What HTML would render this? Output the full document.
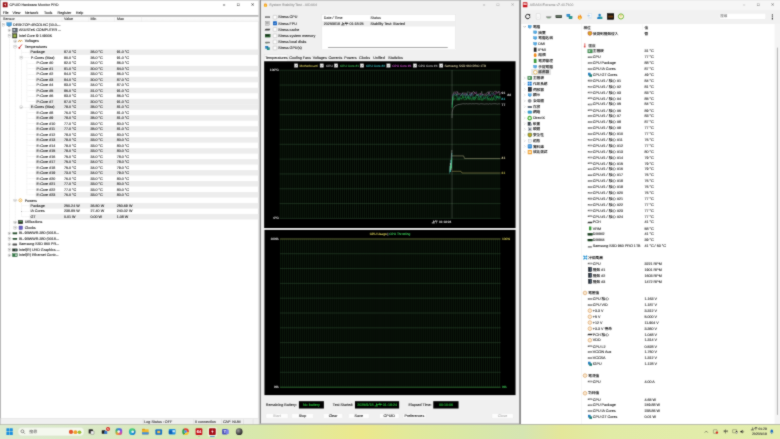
<!DOCTYPE html>
<html><head><meta charset="utf-8"><title>Desktop</title>
<style>
html,body{margin:0;padding:0}
body{width:780px;height:439px;overflow:hidden;background:#dfeab4;position:relative}
#root{position:absolute;left:0;top:0;width:2560px;height:1440px;transform:scale(0.3046875,0.3048611);transform-origin:0 0;
 font:12px "Liberation Sans","Noto Sans CJK TC",sans-serif;color:#222;overflow:hidden;text-rendering:geometricPrecision;-webkit-text-stroke:0.3px}
#wrap{position:absolute;left:0;top:0;width:780px;height:439px;overflow:hidden;filter:url(#soft)}
#root div{position:absolute;box-sizing:border-box}
#root span.t{position:absolute;white-space:nowrap;line-height:20px;height:20px}
#root span.g{position:absolute;white-space:nowrap;line-height:20px;height:20px;font-size:10.5px}
#root svg{position:absolute;overflow:visible}
</style></head><body>
<svg width="0" height="0" style="position:absolute"><filter id="soft" x="0" y="0" width="100%" height="100%" color-interpolation-filters="sRGB"><feConvolveMatrix order="3" kernelMatrix="0.03 0.08 0.03 0.08 0.56 0.08 0.03 0.08 0.03" edgeMode="duplicate" preserveAlpha="true"/></filter></svg>
<div id="wrap"><div id="root">
<div style="left:0.0px;top:0.0px;width:2560.0px;height:1394.0px;background:#c8c8c8"></div>
<div style="left:0.0px;top:0.0px;width:849.0px;height:1393.0px;background:#fff;border-left:2px solid #8a8a8a;border-top:1px solid #8a8a8a"></div>
<div style="left:849.0px;top:0.0px;width:7.0px;height:1393.0px;background:#cfcfcf"></div>
<div style="left:9.0px;top:7.0px;width:16.0px;height:17.0px;background:#9a1016;border-radius:2px"></div>
<svg style="left:9px;top:7px" width="16" height="17" viewBox="0 0 16 17"><path d="M9 2 L5 9 H8 L7 15 L11 7 H8 Z" fill="#fff"/></svg>
<span class="t" style="left:31.0px;top:5.5px;color:#333;font-size:11.7px">CPUID Hardware Monitor PRO</span>
<span class="t" style="left:729.2px;top:5.0px;color:#333;font-size:13px;width:12px;text-align:center">&#8211;</span>
<span class="t" style="left:776.1px;top:5.0px;color:#333;font-size:13px;width:12px;text-align:center">&#9633;</span>
<span class="t" style="left:823.4px;top:5.0px;color:#333;font-size:13px;width:12px;text-align:center">&#10005;</span>
<span class="t" style="left:9.0px;top:31.0px;color:#222">File</span>
<span class="t" style="left:41.0px;top:31.0px;color:#222">View</span>
<span class="t" style="left:82.0px;top:31.0px;color:#222">Network</span>
<span class="t" style="left:144.0px;top:31.0px;color:#222">Tools</span>
<span class="t" style="left:189.0px;top:31.0px;color:#222">Register</span>
<span class="t" style="left:249.0px;top:31.0px;color:#222">Help</span>
<div style="left:2.0px;top:49.5px;width:846.0px;height:5.0px;background:#a2a2a2"></div>
<div style="left:2.0px;top:54.5px;width:846.0px;height:16.5px;background:linear-gradient(#fff,#f4f4f4);border-bottom:1px solid #d8d8d8"></div>
<div style="left:203.0px;top:53.0px;width:1.0px;height:18.0px;background:#dcdcdc"></div>
<div style="left:290.0px;top:53.0px;width:1.0px;height:18.0px;background:#dcdcdc"></div>
<div style="left:376.0px;top:53.0px;width:1.0px;height:18.0px;background:#dcdcdc"></div>
<div style="left:463.0px;top:53.0px;width:1.0px;height:18.0px;background:#dcdcdc"></div>
<span class="t" style="left:10.0px;top:52.0px;color:#333">Sensor</span>
<span class="t" style="left:210.0px;top:52.0px;color:#333">Value</span>
<span class="t" style="left:297.0px;top:52.0px;color:#333">Min</span>
<span class="t" style="left:384.0px;top:52.0px;color:#333">Max</span>
<div style="left:97.0px;top:162.0px;width:751.0px;height:18.0px;background:#ededed"></div>
<div style="left:116.5px;top:216.0px;width:731.5px;height:18.0px;background:#ededed"></div>
<div style="left:116.5px;top:252.0px;width:731.5px;height:18.0px;background:#ededed"></div>
<div style="left:116.5px;top:288.0px;width:731.5px;height:18.0px;background:#ededed"></div>
<div style="left:116.5px;top:324.0px;width:731.5px;height:18.0px;background:#ededed"></div>
<div style="left:116.5px;top:378.0px;width:731.5px;height:18.0px;background:#ededed"></div>
<div style="left:116.5px;top:414.0px;width:731.5px;height:18.0px;background:#ededed"></div>
<div style="left:116.5px;top:450.0px;width:731.5px;height:18.0px;background:#ededed"></div>
<div style="left:116.5px;top:486.0px;width:731.5px;height:18.0px;background:#ededed"></div>
<div style="left:116.5px;top:522.0px;width:731.5px;height:18.0px;background:#ededed"></div>
<div style="left:116.5px;top:558.0px;width:731.5px;height:18.0px;background:#ededed"></div>
<div style="left:116.5px;top:594.0px;width:731.5px;height:18.0px;background:#ededed"></div>
<div style="left:116.5px;top:630.0px;width:731.5px;height:18.0px;background:#ededed"></div>
<div style="left:97.0px;top:666.0px;width:751.0px;height:18.0px;background:#ededed"></div>
<div style="left:97.0px;top:702.0px;width:751.0px;height:18.0px;background:#ededed"></div>
<div style="left:97.0px;top:342.0px;width:751.0px;height:18.0px;background:#ededed"></div>
<div style="left:30.0px;top:90.0px;width:1.0px;height:747.0px;border-left:1px dotted #b8b8b8"></div>
<div style="left:49.0px;top:126.0px;width:1.0px;height:621.0px;border-left:1px dotted #b8b8b8"></div>
<div style="left:69.0px;top:162.0px;width:1.0px;height:189.0px;border-left:1px dotted #b8b8b8"></div>
<div style="left:69.0px;top:666.0px;width:1.0px;height:45.0px;border-left:1px dotted #b8b8b8"></div>
<div style="left:88.0px;top:198.0px;width:1.0px;height:135.0px;border-left:1px dotted #b8b8b8"></div>
<div style="left:88.0px;top:360.0px;width:1.0px;height:279.0px;border-left:1px dotted #b8b8b8"></div>
<div style="left:88.0px;top:207.0px;width:28.0px;height:1.0px;border-top:1px dotted #b8b8b8"></div>
<div style="left:88.0px;top:225.0px;width:28.0px;height:1.0px;border-top:1px dotted #b8b8b8"></div>
<div style="left:88.0px;top:243.0px;width:28.0px;height:1.0px;border-top:1px dotted #b8b8b8"></div>
<div style="left:88.0px;top:261.0px;width:28.0px;height:1.0px;border-top:1px dotted #b8b8b8"></div>
<div style="left:88.0px;top:279.0px;width:28.0px;height:1.0px;border-top:1px dotted #b8b8b8"></div>
<div style="left:88.0px;top:297.0px;width:28.0px;height:1.0px;border-top:1px dotted #b8b8b8"></div>
<div style="left:88.0px;top:315.0px;width:28.0px;height:1.0px;border-top:1px dotted #b8b8b8"></div>
<div style="left:88.0px;top:333.0px;width:28.0px;height:1.0px;border-top:1px dotted #b8b8b8"></div>
<div style="left:88.0px;top:369.0px;width:28.0px;height:1.0px;border-top:1px dotted #b8b8b8"></div>
<div style="left:88.0px;top:387.0px;width:28.0px;height:1.0px;border-top:1px dotted #b8b8b8"></div>
<div style="left:88.0px;top:405.0px;width:28.0px;height:1.0px;border-top:1px dotted #b8b8b8"></div>
<div style="left:88.0px;top:423.0px;width:28.0px;height:1.0px;border-top:1px dotted #b8b8b8"></div>
<div style="left:88.0px;top:441.0px;width:28.0px;height:1.0px;border-top:1px dotted #b8b8b8"></div>
<div style="left:88.0px;top:459.0px;width:28.0px;height:1.0px;border-top:1px dotted #b8b8b8"></div>
<div style="left:88.0px;top:477.0px;width:28.0px;height:1.0px;border-top:1px dotted #b8b8b8"></div>
<div style="left:88.0px;top:495.0px;width:28.0px;height:1.0px;border-top:1px dotted #b8b8b8"></div>
<div style="left:88.0px;top:513.0px;width:28.0px;height:1.0px;border-top:1px dotted #b8b8b8"></div>
<div style="left:88.0px;top:531.0px;width:28.0px;height:1.0px;border-top:1px dotted #b8b8b8"></div>
<div style="left:88.0px;top:549.0px;width:28.0px;height:1.0px;border-top:1px dotted #b8b8b8"></div>
<div style="left:88.0px;top:567.0px;width:28.0px;height:1.0px;border-top:1px dotted #b8b8b8"></div>
<div style="left:88.0px;top:585.0px;width:28.0px;height:1.0px;border-top:1px dotted #b8b8b8"></div>
<div style="left:88.0px;top:603.0px;width:28.0px;height:1.0px;border-top:1px dotted #b8b8b8"></div>
<div style="left:88.0px;top:621.0px;width:28.0px;height:1.0px;border-top:1px dotted #b8b8b8"></div>
<div style="left:88.0px;top:639.0px;width:28.0px;height:1.0px;border-top:1px dotted #b8b8b8"></div>
<div style="left:69.0px;top:171.0px;width:28.0px;height:1.0px;border-top:1px dotted #b8b8b8"></div>
<div style="left:69.0px;top:675.0px;width:28.0px;height:1.0px;border-top:1px dotted #b8b8b8"></div>
<div style="left:69.0px;top:693.0px;width:28.0px;height:1.0px;border-top:1px dotted #b8b8b8"></div>
<div style="left:69.0px;top:711.0px;width:28.0px;height:1.0px;border-top:1px dotted #b8b8b8"></div>
<div style="left:30.0px;top:99.0px;width:10.0px;height:1.0px;border-top:1px dotted #b8b8b8"></div>
<div style="left:30.0px;top:117.0px;width:10.0px;height:1.0px;border-top:1px dotted #b8b8b8"></div>
<div style="left:30.0px;top:765.0px;width:10.0px;height:1.0px;border-top:1px dotted #b8b8b8"></div>
<div style="left:30.0px;top:783.0px;width:10.0px;height:1.0px;border-top:1px dotted #b8b8b8"></div>
<div style="left:30.0px;top:801.0px;width:10.0px;height:1.0px;border-top:1px dotted #b8b8b8"></div>
<div style="left:30.0px;top:819.0px;width:10.0px;height:1.0px;border-top:1px dotted #b8b8b8"></div>
<div style="left:30.0px;top:837.0px;width:10.0px;height:1.0px;border-top:1px dotted #b8b8b8"></div>
<div style="left:49.0px;top:135.0px;width:10.0px;height:1.0px;border-top:1px dotted #b8b8b8"></div>
<div style="left:49.0px;top:153.0px;width:10.0px;height:1.0px;border-top:1px dotted #b8b8b8"></div>
<div style="left:49.0px;top:657.0px;width:10.0px;height:1.0px;border-top:1px dotted #b8b8b8"></div>
<div style="left:49.0px;top:729.0px;width:10.0px;height:1.0px;border-top:1px dotted #b8b8b8"></div>
<div style="left:49.0px;top:747.0px;width:10.0px;height:1.0px;border-top:1px dotted #b8b8b8"></div>
<div style="left:69.0px;top:189.0px;width:28.0px;height:1.0px;border-top:1px dotted #b8b8b8"></div>
<div style="left:69.0px;top:351.0px;width:28.0px;height:1.0px;border-top:1px dotted #b8b8b8"></div>
<div style="left:6.5px;top:76.5px;width:9.0px;height:9.0px;border:1px solid #9a9a9a;background:#fff"></div>
<div style="left:8.5px;top:80.5px;width:5.0px;height:1.0px;background:#444"></div>
<div style="left:22.0px;top:74.0px;width:16.0px;height:11.0px;background:#4aa3df;border:1px solid #2b6ea3"></div>
<div style="left:26.0px;top:86.0px;width:8.0px;height:2.0px;background:#777"></div>
<span class="t" style="left:43.0px;top:71.0px;letter-spacing:-0.3px">DESKTOP-4RCOLHC (10.0....</span>
<div style="left:25.5px;top:94.5px;width:9.0px;height:9.0px;border:1px solid #9a9a9a;background:#fff"></div>
<div style="left:27.5px;top:98.5px;width:5.0px;height:1.0px;background:#444"></div>
<div style="left:29.5px;top:96.5px;width:1.0px;height:5.0px;background:#444"></div>
<div style="left:41.0px;top:92.0px;width:16.0px;height:14.0px;background:#5b6570;border:1px solid #333"></div>
<div style="left:44.0px;top:95.0px;width:6.0px;height:6.0px;background:#c9d2da"></div>
<span class="t" style="left:62.0px;top:89.0px;">ASUSTeK COMPUTER ...</span>
<div style="left:25.5px;top:112.5px;width:9.0px;height:9.0px;border:1px solid #9a9a9a;background:#fff"></div>
<div style="left:27.5px;top:116.5px;width:5.0px;height:1.0px;background:#444"></div>
<div style="left:41.0px;top:110.0px;width:15.0px;height:15.0px;background:#3c4a2a;border:1px solid #222"></div>
<div style="left:44.0px;top:113.0px;width:9.0px;height:9.0px;background:#9fb84a"></div>
<span class="t" style="left:62.0px;top:107.0px;">Intel Core i9 14900K</span>
<div style="left:44.5px;top:130.5px;width:9.0px;height:9.0px;border:1px solid #9a9a9a;background:#fff"></div>
<div style="left:46.5px;top:134.5px;width:5.0px;height:1.0px;background:#444"></div>
<div style="left:48.5px;top:132.5px;width:1.0px;height:5.0px;background:#444"></div>
<svg style="left:60px;top:129.0px" width="14" height="12"><path d="M0 9 L4 2 L7 8 L10 3 L14 6" stroke="#d08a1e" stroke-width="2.4" fill="none"/></svg>
<span class="t" style="left:81.0px;top:125.0px;">Voltages</span>
<div style="left:44.5px;top:148.5px;width:9.0px;height:9.0px;border:1px solid #9a9a9a;background:#fff"></div>
<div style="left:46.5px;top:152.5px;width:5.0px;height:1.0px;background:#444"></div>
<svg style="left:60px;top:145.0px" width="14" height="16"><path d="M12 1 L4 11" stroke="#c81e1e" stroke-width="2.6"/><circle cx="3.5" cy="12" r="3.2" fill="#c81e1e"/></svg>
<span class="t" style="left:81.0px;top:143.0px;">Temperatures</span>
<span class="t" style="left:100.0px;top:161.0px;">Package</span>
<span class="t" style="left:210.0px;top:161.0px;">87.0 °C</span>
<span class="t" style="left:297.0px;top:161.0px;">36.0 °C</span>
<span class="t" style="left:383.0px;top:161.0px;">91.0 °C</span>
<div style="left:64.5px;top:184.5px;width:9.0px;height:9.0px;border:1px solid #9a9a9a;background:#fff"></div>
<div style="left:66.5px;top:188.5px;width:5.0px;height:1.0px;background:#444"></div>
<span class="t" style="left:101.0px;top:179.0px;">P-Cores (Max)</span>
<span class="t" style="left:210.0px;top:179.0px;">90.0 °C</span>
<span class="t" style="left:297.0px;top:179.0px;">36.0 °C</span>
<span class="t" style="left:383.0px;top:179.0px;">91.0 °C</span>
<span class="t" style="left:120.0px;top:197.0px;">P-Core #0</span>
<span class="t" style="left:210.0px;top:197.0px;">82.0 °C</span>
<span class="t" style="left:297.0px;top:197.0px;">34.0 °C</span>
<span class="t" style="left:383.0px;top:197.0px;">86.0 °C</span>
<span class="t" style="left:120.0px;top:215.0px;">P-Core #1</span>
<span class="t" style="left:210.0px;top:215.0px;">81.0 °C</span>
<span class="t" style="left:297.0px;top:215.0px;">30.0 °C</span>
<span class="t" style="left:383.0px;top:215.0px;">84.0 °C</span>
<span class="t" style="left:120.0px;top:233.0px;">P-Core #2</span>
<span class="t" style="left:210.0px;top:233.0px;">84.0 °C</span>
<span class="t" style="left:297.0px;top:233.0px;">33.0 °C</span>
<span class="t" style="left:383.0px;top:233.0px;">86.0 °C</span>
<span class="t" style="left:120.0px;top:251.0px;">P-Core #3</span>
<span class="t" style="left:210.0px;top:251.0px;">84.0 °C</span>
<span class="t" style="left:297.0px;top:251.0px;">30.0 °C</span>
<span class="t" style="left:383.0px;top:251.0px;">87.0 °C</span>
<span class="t" style="left:120.0px;top:269.0px;">P-Core #4</span>
<span class="t" style="left:210.0px;top:269.0px;">83.0 °C</span>
<span class="t" style="left:297.0px;top:269.0px;">34.0 °C</span>
<span class="t" style="left:383.0px;top:269.0px;">87.0 °C</span>
<span class="t" style="left:120.0px;top:287.0px;">P-Core #5</span>
<span class="t" style="left:210.0px;top:287.0px;">86.0 °C</span>
<span class="t" style="left:297.0px;top:287.0px;">31.0 °C</span>
<span class="t" style="left:383.0px;top:287.0px;">91.0 °C</span>
<span class="t" style="left:120.0px;top:305.0px;">P-Core #6</span>
<span class="t" style="left:210.0px;top:305.0px;">83.0 °C</span>
<span class="t" style="left:297.0px;top:305.0px;">31.0 °C</span>
<span class="t" style="left:383.0px;top:305.0px;">86.0 °C</span>
<span class="t" style="left:120.0px;top:323.0px;">P-Core #7</span>
<span class="t" style="left:210.0px;top:323.0px;">87.0 °C</span>
<span class="t" style="left:297.0px;top:323.0px;">30.0 °C</span>
<span class="t" style="left:383.0px;top:323.0px;">91.0 °C</span>
<div style="left:64.5px;top:346.5px;width:9.0px;height:9.0px;border:1px solid #9a9a9a;background:#fff"></div>
<div style="left:66.5px;top:350.5px;width:5.0px;height:1.0px;background:#444"></div>
<span class="t" style="left:101.0px;top:341.0px;">E-Cores (Max)</span>
<span class="t" style="left:210.0px;top:341.0px;">79.0 °C</span>
<span class="t" style="left:297.0px;top:341.0px;">35.0 °C</span>
<span class="t" style="left:383.0px;top:341.0px;">81.0 °C</span>
<span class="t" style="left:120.0px;top:359.0px;">E-Core #8</span>
<span class="t" style="left:210.0px;top:359.0px;">76.0 °C</span>
<span class="t" style="left:297.0px;top:359.0px;">35.0 °C</span>
<span class="t" style="left:383.0px;top:359.0px;">81.0 °C</span>
<span class="t" style="left:120.0px;top:377.0px;">E-Core #9</span>
<span class="t" style="left:210.0px;top:377.0px;">78.0 °C</span>
<span class="t" style="left:297.0px;top:377.0px;">35.0 °C</span>
<span class="t" style="left:383.0px;top:377.0px;">81.0 °C</span>
<span class="t" style="left:120.0px;top:395.0px;">E-Core #10</span>
<span class="t" style="left:210.0px;top:395.0px;">77.0 °C</span>
<span class="t" style="left:297.0px;top:395.0px;">33.0 °C</span>
<span class="t" style="left:383.0px;top:395.0px;">80.0 °C</span>
<span class="t" style="left:120.0px;top:413.0px;">E-Core #11</span>
<span class="t" style="left:210.0px;top:413.0px;">77.0 °C</span>
<span class="t" style="left:297.0px;top:413.0px;">35.0 °C</span>
<span class="t" style="left:383.0px;top:413.0px;">81.0 °C</span>
<span class="t" style="left:120.0px;top:431.0px;">E-Core #12</span>
<span class="t" style="left:210.0px;top:431.0px;">78.0 °C</span>
<span class="t" style="left:297.0px;top:431.0px;">33.0 °C</span>
<span class="t" style="left:383.0px;top:431.0px;">80.0 °C</span>
<span class="t" style="left:120.0px;top:449.0px;">E-Core #13</span>
<span class="t" style="left:210.0px;top:449.0px;">79.0 °C</span>
<span class="t" style="left:297.0px;top:449.0px;">33.0 °C</span>
<span class="t" style="left:383.0px;top:449.0px;">80.0 °C</span>
<span class="t" style="left:120.0px;top:467.0px;">E-Core #14</span>
<span class="t" style="left:210.0px;top:467.0px;">79.0 °C</span>
<span class="t" style="left:297.0px;top:467.0px;">33.0 °C</span>
<span class="t" style="left:383.0px;top:467.0px;">80.0 °C</span>
<span class="t" style="left:120.0px;top:485.0px;">E-Core #15</span>
<span class="t" style="left:210.0px;top:485.0px;">79.0 °C</span>
<span class="t" style="left:297.0px;top:485.0px;">33.0 °C</span>
<span class="t" style="left:383.0px;top:485.0px;">80.0 °C</span>
<span class="t" style="left:120.0px;top:503.0px;">E-Core #16</span>
<span class="t" style="left:210.0px;top:503.0px;">75.0 °C</span>
<span class="t" style="left:297.0px;top:503.0px;">34.0 °C</span>
<span class="t" style="left:383.0px;top:503.0px;">78.0 °C</span>
<span class="t" style="left:120.0px;top:521.0px;">E-Core #17</span>
<span class="t" style="left:210.0px;top:521.0px;">75.0 °C</span>
<span class="t" style="left:297.0px;top:521.0px;">34.0 °C</span>
<span class="t" style="left:383.0px;top:521.0px;">78.0 °C</span>
<span class="t" style="left:120.0px;top:539.0px;">E-Core #18</span>
<span class="t" style="left:210.0px;top:539.0px;">75.0 °C</span>
<span class="t" style="left:297.0px;top:539.0px;">34.0 °C</span>
<span class="t" style="left:383.0px;top:539.0px;">79.0 °C</span>
<span class="t" style="left:120.0px;top:557.0px;">E-Core #19</span>
<span class="t" style="left:210.0px;top:557.0px;">73.0 °C</span>
<span class="t" style="left:297.0px;top:557.0px;">34.0 °C</span>
<span class="t" style="left:383.0px;top:557.0px;">79.0 °C</span>
<span class="t" style="left:120.0px;top:575.0px;">E-Core #20</span>
<span class="t" style="left:210.0px;top:575.0px;">76.0 °C</span>
<span class="t" style="left:297.0px;top:575.0px;">33.0 °C</span>
<span class="t" style="left:383.0px;top:575.0px;">80.0 °C</span>
<span class="t" style="left:120.0px;top:593.0px;">E-Core #21</span>
<span class="t" style="left:210.0px;top:593.0px;">77.0 °C</span>
<span class="t" style="left:297.0px;top:593.0px;">33.0 °C</span>
<span class="t" style="left:383.0px;top:593.0px;">80.0 °C</span>
<span class="t" style="left:120.0px;top:611.0px;">E-Core #22</span>
<span class="t" style="left:210.0px;top:611.0px;">77.0 °C</span>
<span class="t" style="left:297.0px;top:611.0px;">33.0 °C</span>
<span class="t" style="left:383.0px;top:611.0px;">80.0 °C</span>
<span class="t" style="left:120.0px;top:629.0px;">E-Core #23</span>
<span class="t" style="left:210.0px;top:629.0px;">76.0 °C</span>
<span class="t" style="left:297.0px;top:629.0px;">33.0 °C</span>
<span class="t" style="left:383.0px;top:629.0px;">80.0 °C</span>
<div style="left:44.5px;top:652.5px;width:9.0px;height:9.0px;border:1px solid #9a9a9a;background:#fff"></div>
<div style="left:46.5px;top:656.5px;width:5.0px;height:1.0px;background:#444"></div>
<svg style="left:60px;top:650.0px" width="14" height="14"><circle cx="7" cy="7" r="5" fill="none" stroke="#e6a020" stroke-width="2.2"/><circle cx="7" cy="7" r="1.6" fill="#e6a020"/></svg>
<span class="t" style="left:81.0px;top:647.0px;">Powers</span>
<span class="t" style="left:100.0px;top:665.0px;">Package</span>
<span class="t" style="left:210.0px;top:665.0px;">250.24 W</span>
<span class="t" style="left:297.0px;top:665.0px;">36.50 W</span>
<span class="t" style="left:383.0px;top:665.0px;">250.69 W</span>
<span class="t" style="left:100.0px;top:683.0px;">IA Cores</span>
<span class="t" style="left:210.0px;top:683.0px;">238.85 W</span>
<span class="t" style="left:297.0px;top:683.0px;">27.40 W</span>
<span class="t" style="left:383.0px;top:683.0px;">240.02 W</span>
<span class="t" style="left:100.0px;top:701.0px;">GT</span>
<span class="t" style="left:210.0px;top:701.0px;">0.01 W</span>
<span class="t" style="left:297.0px;top:701.0px;">0.00 W</span>
<span class="t" style="left:383.0px;top:701.0px;">1.08 W</span>
<div style="left:44.5px;top:724.5px;width:9.0px;height:9.0px;border:1px solid #9a9a9a;background:#fff"></div>
<div style="left:46.5px;top:728.5px;width:5.0px;height:1.0px;background:#444"></div>
<div style="left:48.5px;top:726.5px;width:1.0px;height:5.0px;background:#444"></div>
<div style="left:60.0px;top:723.0px;width:15.0px;height:11.0px;background:#2e3b2e;border:1px solid #1d1d1d"></div>
<div style="left:62.0px;top:726.0px;width:11.0px;height:2.0px;background:#5fbf5f"></div>
<span class="t" style="left:81.0px;top:719.0px;">Utilizations</span>
<div style="left:44.5px;top:742.5px;width:9.0px;height:9.0px;border:1px solid #9a9a9a;background:#fff"></div>
<div style="left:46.5px;top:746.5px;width:5.0px;height:1.0px;background:#444"></div>
<div style="left:48.5px;top:744.5px;width:1.0px;height:5.0px;background:#444"></div>
<div style="left:62.0px;top:741.0px;width:12.0px;height:12.0px;background:#6b62c4;border:1px solid #3a3390"></div>
<span class="t" style="left:81.0px;top:737.0px;">Clocks</span>
<div style="left:25.5px;top:760.5px;width:9.0px;height:9.0px;border:1px solid #9a9a9a;background:#fff"></div>
<div style="left:27.5px;top:764.5px;width:5.0px;height:1.0px;background:#444"></div>
<div style="left:29.5px;top:762.5px;width:1.0px;height:5.0px;background:#444"></div>
<div style="left:42.0px;top:763.0px;width:14.0px;height:5.0px;background:#2c5a34;border:1px solid #1c3a22"></div>
<span class="t" style="left:62.0px;top:755.0px;">BL.9BWWR.380 (0018...</span>
<div style="left:25.5px;top:778.5px;width:9.0px;height:9.0px;border:1px solid #9a9a9a;background:#fff"></div>
<div style="left:27.5px;top:782.5px;width:5.0px;height:1.0px;background:#444"></div>
<div style="left:29.5px;top:780.5px;width:1.0px;height:5.0px;background:#444"></div>
<div style="left:42.0px;top:781.0px;width:14.0px;height:5.0px;background:#2c5a34;border:1px solid #1c3a22"></div>
<span class="t" style="left:62.0px;top:773.0px;">BL.9BWWR.380 (0018...</span>
<div style="left:25.5px;top:796.5px;width:9.0px;height:9.0px;border:1px solid #9a9a9a;background:#fff"></div>
<div style="left:27.5px;top:800.5px;width:5.0px;height:1.0px;background:#444"></div>
<div style="left:29.5px;top:798.5px;width:1.0px;height:5.0px;background:#444"></div>
<div style="left:41.0px;top:799.0px;width:15.0px;height:6.0px;background:#555;border-radius:1px"></div>
<span class="t" style="left:62.0px;top:791.0px;">Samsung SSD 960 PR...</span>
<div style="left:25.5px;top:814.5px;width:9.0px;height:9.0px;border:1px solid #9a9a9a;background:#fff"></div>
<div style="left:27.5px;top:818.5px;width:5.0px;height:1.0px;background:#444"></div>
<div style="left:29.5px;top:816.5px;width:1.0px;height:5.0px;background:#444"></div>
<div style="left:41.0px;top:816.0px;width:16.0px;height:8.0px;background:#2b3d2b;border:1px solid #222"></div>
<div style="left:50.0px;top:818.0px;width:4.0px;height:4.0px;background:#8ac"></div>
<span class="t" style="left:62.0px;top:809.0px;">Intel(R) UHD Graphics ...</span>
<div style="left:25.5px;top:832.5px;width:9.0px;height:9.0px;border:1px solid #9a9a9a;background:#fff"></div>
<div style="left:27.5px;top:836.5px;width:5.0px;height:1.0px;background:#444"></div>
<div style="left:29.5px;top:834.5px;width:1.0px;height:5.0px;background:#444"></div>
<div style="left:41.0px;top:832.0px;width:16.0px;height:10.0px;background:#2e7a44;border:1px solid #1a4a28"></div>
<div style="left:50.0px;top:834.0px;width:5.0px;height:6.0px;background:#ddd"></div>
<span class="t" style="left:62.0px;top:827.0px;">Intel(R) Ethernet Contr...</span>
<div style="left:2.0px;top:1372.0px;width:846.0px;height:21.0px;background:#f0f0f0;border-top:1px solid #d0d0d0"></div>
<div style="left:468.7px;top:1375.0px;width:1.0px;height:16.0px;background:#c4c4c4"></div>
<div style="left:635.7px;top:1375.0px;width:1.0px;height:16.0px;background:#c4c4c4"></div>
<div style="left:726.3px;top:1375.0px;width:1.0px;height:16.0px;background:#c4c4c4"></div>
<div style="left:756.8px;top:1375.0px;width:1.0px;height:16.0px;background:#c4c4c4"></div>
<div style="left:798.5px;top:1375.0px;width:1.0px;height:16.0px;background:#c4c4c4"></div>
<div style="left:830.4px;top:1375.0px;width:1.0px;height:16.0px;background:#c4c4c4"></div>
<span class="t" style="left:473.6px;top:1372.5px;color:#333">Log Status : OFF</span>
<span class="t" style="left:640.0px;top:1372.5px;color:#333">0 connection</span>
<span class="t" style="left:731.6px;top:1372.5px;color:#333">CAP</span>
<span class="t" style="left:762.4px;top:1372.5px;color:#333">NUM</span>
<div style="left:853.0px;top:0.0px;width:851.4px;height:1389.8px;background:#f0f0f0;border-left:3px solid #6e6e6e;border-top:1px solid #6f6f6f;border-bottom:2px solid #b5b5b5"></div>
<svg style="left:864.5px;top:7.2px" width="13" height="16" viewBox="0 0 13 16"><path d="M6 0 C7 4 12 6 12 11 C12 14 9.5 16 6.5 16 C3 16 1 14 1 11 C1 8 3 7 3.5 4 C5 5 5.5 6 5.5 8 C7 6 7 3 6 0Z" fill="#f39a1e"/><path d="M6.5 16 C4.5 16 3.5 14.5 3.5 13 C3.5 11 5.5 10 6 8 C8 10 9.5 11 9.5 13 C9.5 14.8 8.3 16 6.5 16Z" fill="#fbd34a"/></svg>
<span class="t" style="left:883.9px;top:5.5px;color:#9b9b9b;font-size:11.6px">System Stability Test - AIDA64</span>
<span class="t" style="left:1582.5px;top:5.0px;color:#a6a6a6;font-size:13px;width:12px;text-align:center">&#8211;</span>
<span class="t" style="left:1628.5px;top:5.0px;color:#a6a6a6;font-size:13px;width:12px;text-align:center">&#9633;</span>
<span class="t" style="left:1676.7px;top:5.0px;color:#a6a6a6;font-size:13px;width:12px;text-align:center">&#10005;</span>
<div style="left:896.0px;top:49.7px;width:13.0px;height:13.0px;background:#fff;border:1px solid #8f8f8f;border-radius:2px"></div>
<span class="t" style="left:913.1px;top:46.2px;color:#222">Stress CPU</span>
<div style="left:870.4px;top:53.2px;width:16.0px;height:6.0px;background:#6b6b6b;border-radius:1px"></div>
<div style="left:872.4px;top:54.7px;width:12.0px;height:2.0px;background:#c8c8c8"></div>
<div style="left:896.0px;top:70.1px;width:13.0px;height:13.0px;background:#1a66c2;border-radius:2px"></div>
<svg style="left:896.0px;top:70.1px" width="13" height="13"><path d="M3 6.5 L5.5 9 L10 4" stroke="#fff" stroke-width="1.6" fill="none"/></svg>
<span class="t" style="left:913.1px;top:66.6px;color:#222">Stress FPU</span>
<div style="left:871.4px;top:69.6px;width:13.0px;height:13.0px;background:#d9d9d9;border:1px solid #777"></div>
<div style="left:873.4px;top:71.6px;width:9.0px;height:2.0px;background:#888"></div>
<div style="left:873.4px;top:76.6px;width:9.0px;height:2.0px;background:#888"></div>
<div style="left:896.0px;top:90.4px;width:13.0px;height:13.0px;background:#fff;border:1px solid #8f8f8f;border-radius:2px"></div>
<span class="t" style="left:913.1px;top:86.9px;color:#222">Stress cache</span>
<div style="left:870.4px;top:93.9px;width:16.0px;height:6.0px;background:#4a4a4a;border-radius:1px;transform:skewX(-30deg)"></div>
<div style="left:896.0px;top:110.8px;width:13.0px;height:13.0px;background:#fff;border:1px solid #8f8f8f;border-radius:2px"></div>
<span class="t" style="left:913.1px;top:107.2px;color:#222">Stress system memory</span>
<div style="left:870.4px;top:112.2px;width:17.0px;height:10.0px;background:#2c6b33;border:1px solid #1a3d1e"></div>
<div style="left:872.4px;top:114.2px;width:12.0px;height:3.0px;background:#111"></div>
<div style="left:896.0px;top:131.1px;width:13.0px;height:13.0px;background:#fff;border:1px solid #8f8f8f;border-radius:2px"></div>
<span class="t" style="left:913.1px;top:127.6px;color:#222">Stress local disks</span>
<div style="left:870.4px;top:136.6px;width:16.0px;height:5.0px;background:#7a7a7a;border-radius:2px"></div>
<div style="left:872.4px;top:140.6px;width:6.0px;height:1.0px;background:#3a9a3a"></div>
<div style="left:896.0px;top:151.4px;width:13.0px;height:13.0px;background:#fff;border:1px solid #8f8f8f;border-radius:2px"></div>
<span class="t" style="left:913.1px;top:147.9px;color:#222">Stress GPU(s)</span>
<div style="left:871.4px;top:150.9px;width:9.0px;height:8.0px;background:#2f8fd8;border:1px solid #1c5f99"></div>
<div style="left:876.4px;top:155.9px;width:9.0px;height:8.0px;background:#2a9d8f;border:1px solid #156"></div>
<div style="left:1055.5px;top:46.6px;width:439.8px;height:117.8px;background:#fff;border:1px solid #d4d4d4"></div>
<div style="left:1056.5px;top:69.2px;width:437.8px;height:18.0px;background:#efefef"></div>
<span class="t" style="left:1062.7px;top:48.7px;color:#333">Date / Time</span>
<span class="t" style="left:1216.0px;top:48.7px;color:#333">Status</span>
<span class="t" style="left:1062.7px;top:68.4px;color:#222">2025/9/18 上午 01:18:25</span>
<span class="t" style="left:1216.0px;top:68.4px;color:#222">Stability Test: Started</span>
<div style="left:1075.9px;top:153.5px;width:394.5px;height:3.0px;background:#8e8e8e;border-radius:2px"></div>
<div style="left:866.5px;top:178.1px;width:78.8px;height:23.6px;background:#fafafa;border:1px solid #d0d0d0;border-bottom:none"></div>
<span class="t" style="left:870.4px;top:178.3px;color:#222">Temperatures</span>
<span class="t" style="left:949.5px;top:178.3px;color:#222">Cooling Fans</span>
<span class="t" style="left:1026.3px;top:178.3px;color:#222">Voltages</span>
<span class="t" style="left:1077.8px;top:178.3px;color:#222">Currents</span>
<span class="t" style="left:1130.0px;top:178.3px;color:#222">Powers</span>
<span class="t" style="left:1178.3px;top:178.3px;color:#222">Clocks</span>
<span class="t" style="left:1225.2px;top:178.3px;color:#222">Unified</span>
<span class="t" style="left:1274.4px;top:178.3px;color:#222">Statistics</span>
<div style="left:867.4px;top:201.1px;width:824.5px;height:546.8px;background:#000"></div>
<div style="left:917.7px;top:230.3px;width:725.3px;height:486.1px;background:#020502"></div>
<svg style="left:0;top:0" width="2560" height="1440"><path d="M919.7 230.3V716.4M926.3 230.3V716.4M932.8 230.3V716.4M939.4 230.3V716.4M946.0 230.3V716.4M952.6 230.3V716.4M959.2 230.3V716.4M965.8 230.3V716.4M972.4 230.3V716.4M979.0 230.3V716.4M985.6 230.3V716.4M992.2 230.3V716.4M998.7 230.3V716.4M1005.3 230.3V716.4M1011.9 230.3V716.4M1018.5 230.3V716.4M1025.1 230.3V716.4M1031.7 230.3V716.4M1038.3 230.3V716.4M1044.9 230.3V716.4M1051.5 230.3V716.4M1058.1 230.3V716.4M1064.6 230.3V716.4M1071.2 230.3V716.4M1077.8 230.3V716.4M1084.4 230.3V716.4M1091.0 230.3V716.4M1097.6 230.3V716.4M1104.2 230.3V716.4M1110.8 230.3V716.4M1117.4 230.3V716.4M1124.0 230.3V716.4M1130.5 230.3V716.4M1137.1 230.3V716.4M1143.7 230.3V716.4M1150.3 230.3V716.4M1156.9 230.3V716.4M1163.5 230.3V716.4M1170.1 230.3V716.4M1176.7 230.3V716.4M1183.3 230.3V716.4M1189.9 230.3V716.4M1196.4 230.3V716.4M1203.0 230.3V716.4M1209.6 230.3V716.4M1216.2 230.3V716.4M1222.8 230.3V716.4M1229.4 230.3V716.4M1236.0 230.3V716.4M1242.6 230.3V716.4M1249.2 230.3V716.4M1255.8 230.3V716.4M1262.3 230.3V716.4M1268.9 230.3V716.4M1275.5 230.3V716.4M1282.1 230.3V716.4M1288.7 230.3V716.4M1295.3 230.3V716.4M1301.9 230.3V716.4M1308.5 230.3V716.4M1315.1 230.3V716.4M1321.7 230.3V716.4M1328.2 230.3V716.4M1334.8 230.3V716.4M1341.4 230.3V716.4M1348.0 230.3V716.4M1354.6 230.3V716.4M1361.2 230.3V716.4M1367.8 230.3V716.4M1374.4 230.3V716.4M1381.0 230.3V716.4M1387.6 230.3V716.4M1394.1 230.3V716.4M1400.7 230.3V716.4M1407.3 230.3V716.4M1413.9 230.3V716.4M1420.5 230.3V716.4M1427.1 230.3V716.4M1433.7 230.3V716.4M1440.3 230.3V716.4M1446.9 230.3V716.4M1453.5 230.3V716.4M1460.0 230.3V716.4M1466.6 230.3V716.4M1473.2 230.3V716.4M1479.8 230.3V716.4M1486.4 230.3V716.4M1493.0 230.3V716.4M1499.6 230.3V716.4M1506.2 230.3V716.4M1512.8 230.3V716.4M1519.4 230.3V716.4M1525.9 230.3V716.4M1532.5 230.3V716.4M1539.1 230.3V716.4M1545.7 230.3V716.4M1552.3 230.3V716.4M1558.9 230.3V716.4M1565.5 230.3V716.4M1572.1 230.3V716.4M1578.7 230.3V716.4M1585.3 230.3V716.4M1591.8 230.3V716.4M1598.4 230.3V716.4M1605.0 230.3V716.4M1611.6 230.3V716.4M1618.2 230.3V716.4M1624.8 230.3V716.4M1631.4 230.3V716.4M1638.0 230.3V716.4" stroke="#1b331b" stroke-width="1.5" fill="none"/><path d="M917.7 230.3H1643.0M917.7 278.9H1643.0M917.7 327.5H1643.0M917.7 376.1H1643.0M917.7 424.7H1643.0M917.7 473.3H1643.0M917.7 521.9H1643.0M917.7 570.6H1643.0M917.7 619.2H1643.0M917.7 667.8H1643.0M917.7 716.4H1643.0" stroke="#27432a" stroke-width="2" fill="none"/></svg>
<div style="left:868.4px;top:753.8px;width:824.1px;height:541.9px;background:#000"></div>
<div style="left:919.0px;top:783.6px;width:724.3px;height:486.1px;background:#020502"></div>
<svg style="left:0;top:0" width="2560" height="1440"><path d="M921.0 783.6V1269.8M927.6 783.6V1269.8M934.2 783.6V1269.8M940.7 783.6V1269.8M947.3 783.6V1269.8M953.9 783.6V1269.8M960.5 783.6V1269.8M967.1 783.6V1269.8M973.7 783.6V1269.8M980.3 783.6V1269.8M986.9 783.6V1269.8M993.5 783.6V1269.8M1000.1 783.6V1269.8M1006.6 783.6V1269.8M1013.2 783.6V1269.8M1019.8 783.6V1269.8M1026.4 783.6V1269.8M1033.0 783.6V1269.8M1039.6 783.6V1269.8M1046.2 783.6V1269.8M1052.8 783.6V1269.8M1059.4 783.6V1269.8M1066.0 783.6V1269.8M1072.5 783.6V1269.8M1079.1 783.6V1269.8M1085.7 783.6V1269.8M1092.3 783.6V1269.8M1098.9 783.6V1269.8M1105.5 783.6V1269.8M1112.1 783.6V1269.8M1118.7 783.6V1269.8M1125.3 783.6V1269.8M1131.9 783.6V1269.8M1138.4 783.6V1269.8M1145.0 783.6V1269.8M1151.6 783.6V1269.8M1158.2 783.6V1269.8M1164.8 783.6V1269.8M1171.4 783.6V1269.8M1178.0 783.6V1269.8M1184.6 783.6V1269.8M1191.2 783.6V1269.8M1197.8 783.6V1269.8M1204.3 783.6V1269.8M1210.9 783.6V1269.8M1217.5 783.6V1269.8M1224.1 783.6V1269.8M1230.7 783.6V1269.8M1237.3 783.6V1269.8M1243.9 783.6V1269.8M1250.5 783.6V1269.8M1257.1 783.6V1269.8M1263.7 783.6V1269.8M1270.2 783.6V1269.8M1276.8 783.6V1269.8M1283.4 783.6V1269.8M1290.0 783.6V1269.8M1296.6 783.6V1269.8M1303.2 783.6V1269.8M1309.8 783.6V1269.8M1316.4 783.6V1269.8M1323.0 783.6V1269.8M1329.6 783.6V1269.8M1336.1 783.6V1269.8M1342.7 783.6V1269.8M1349.3 783.6V1269.8M1355.9 783.6V1269.8M1362.5 783.6V1269.8M1369.1 783.6V1269.8M1375.7 783.6V1269.8M1382.3 783.6V1269.8M1388.9 783.6V1269.8M1395.5 783.6V1269.8M1402.0 783.6V1269.8M1408.6 783.6V1269.8M1415.2 783.6V1269.8M1421.8 783.6V1269.8M1428.4 783.6V1269.8M1435.0 783.6V1269.8M1441.6 783.6V1269.8M1448.2 783.6V1269.8M1454.8 783.6V1269.8M1461.4 783.6V1269.8M1467.9 783.6V1269.8M1474.5 783.6V1269.8M1481.1 783.6V1269.8M1487.7 783.6V1269.8M1494.3 783.6V1269.8M1500.9 783.6V1269.8M1507.5 783.6V1269.8M1514.1 783.6V1269.8M1520.7 783.6V1269.8M1527.3 783.6V1269.8M1533.8 783.6V1269.8M1540.4 783.6V1269.8M1547.0 783.6V1269.8M1553.6 783.6V1269.8M1560.2 783.6V1269.8M1566.8 783.6V1269.8M1573.4 783.6V1269.8M1580.0 783.6V1269.8M1586.6 783.6V1269.8M1593.2 783.6V1269.8M1599.7 783.6V1269.8M1606.3 783.6V1269.8M1612.9 783.6V1269.8M1619.5 783.6V1269.8M1626.1 783.6V1269.8M1632.7 783.6V1269.8M1639.3 783.6V1269.8" stroke="#1b331b" stroke-width="1.5" fill="none"/><path d="M919.0 783.6H1643.3M919.0 832.2H1643.3M919.0 880.9H1643.3M919.0 929.5H1643.3M919.0 978.1H1643.3M919.0 1026.7H1643.3M919.0 1075.3H1643.3M919.0 1123.9H1643.3M919.0 1172.5H1643.3M919.0 1221.1H1643.3M919.0 1269.8H1643.3" stroke="#27432a" stroke-width="2" fill="none"/></svg>
<div style="left:965.6px;top:208.9px;width:12.0px;height:12.0px;background:#f4f4f4;border:1px solid #999"></div>
<svg style="left:965.6px;top:208.9px" width="12" height="12"><path d="M2.5 6 L5 8.5 L9.5 3.5" stroke="#222" stroke-width="1.5" fill="none"/></svg>
<span class="g" style="left:982.6px;top:206.9px;color:#c4bc58">Motherboard</span>
<div style="left:1050.3px;top:208.9px;width:12.0px;height:12.0px;background:#f4f4f4;border:1px solid #999"></div>
<svg style="left:1050.3px;top:208.9px" width="12" height="12"><path d="M2.5 6 L5 8.5 L9.5 3.5" stroke="#222" stroke-width="1.5" fill="none"/></svg>
<span class="g" style="left:1069.9px;top:206.9px;color:#b8b8b8">CPU</span>
<div style="left:1097.2px;top:208.9px;width:12.0px;height:12.0px;background:#f4f4f4;border:1px solid #999"></div>
<svg style="left:1097.2px;top:208.9px" width="12" height="12"><path d="M2.5 6 L5 8.5 L9.5 3.5" stroke="#222" stroke-width="1.5" fill="none"/></svg>
<span class="g" style="left:1115.9px;top:206.9px;color:#38b050">CPU Core #1</span>
<div style="left:1181.5px;top:208.9px;width:12.0px;height:12.0px;background:#f4f4f4;border:1px solid #999"></div>
<svg style="left:1181.5px;top:208.9px" width="12" height="12"><path d="M2.5 6 L5 8.5 L9.5 3.5" stroke="#222" stroke-width="1.5" fill="none"/></svg>
<span class="g" style="left:1201.2px;top:206.9px;color:#38b4b4">CPU Core #2</span>
<div style="left:1268.8px;top:208.9px;width:12.0px;height:12.0px;background:#f4f4f4;border:1px solid #999"></div>
<svg style="left:1268.8px;top:208.9px" width="12" height="12"><path d="M2.5 6 L5 8.5 L9.5 3.5" stroke="#222" stroke-width="1.5" fill="none"/></svg>
<span class="g" style="left:1287.5px;top:206.9px;color:#c04cc0">CPU Core #3</span>
<div style="left:1356.1px;top:208.9px;width:12.0px;height:12.0px;background:#f4f4f4;border:1px solid #999"></div>
<svg style="left:1356.1px;top:208.9px" width="12" height="12"><path d="M2.5 6 L5 8.5 L9.5 3.5" stroke="#222" stroke-width="1.5" fill="none"/></svg>
<span class="g" style="left:1373.2px;top:206.9px;color:#b4b4b4">CPU Core #4</span>
<div style="left:1441.5px;top:208.9px;width:12.0px;height:12.0px;background:#f4f4f4;border:1px solid #999"></div>
<svg style="left:1441.5px;top:208.9px" width="12" height="12"><path d="M2.5 6 L5 8.5 L9.5 3.5" stroke="#222" stroke-width="1.5" fill="none"/></svg>
<span class="g" style="left:1458.5px;top:206.9px;color:#c8c09a">Samsung SSD 960 PRO 1TB</span>
<span class="g" style="right:1645.0px;top:220.9px;color:#e8e8e8">100°C</span>
<span class="g" style="right:1645.0px;top:706.4px;color:#e8e8e8">0°C</span>
<div style="left:1482.5px;top:230.3px;width:1.2px;height:486.1px;background:#8f978f"></div>
<span class="g" style="right:1078.5px;top:719.5px;color:#e0e0e0">上午 01:18:24</span>
<svg style="left:0;top:0" width="2560" height="1440"><polyline points="1475.6,569.1 1477.6,544.5 1478.9,564.2 1480.2,524.8 1481.5,551.1 1483.2,501.9" fill="none" stroke="#3fd6d6" stroke-width="1.4" opacity="1"/><polyline points="1476.3,564.2 1478.2,534.7 1479.9,557.6 1481.2,515.0 1483.2,492.0" fill="none" stroke="#e8e8e8" stroke-width="1.2" opacity="1"/><polyline points="1476.9,560.9 1479.2,541.2 1480.9,554.4 1483.2,518.3" fill="none" stroke="#3fd05a" stroke-width="1.2" opacity="1"/><polyline points="1483.2,511.4 1521.6,511.4 1524.8,519.9 1642.3,519.9" fill="none" stroke="#b8b48a" stroke-width="1.6" opacity="1"/><polyline points="1483.2,561.9 1513.0,561.9 1516.3,567.5 1642.3,567.5" fill="none" stroke="#b9ad62" stroke-width="1.6" opacity="1"/><polyline points="1483.5,387.1 1484.1,367.4 1486.8,355.9 1493.3,347.7 1503.2,343.1 1516.3,341.1 1517.9,340.5 1522.2,340.2 1526.5,341.1 1530.7,340.1 1535.0,340.9 1539.3,340.6 1543.5,340.1 1547.8,340.8 1552.1,340.1 1556.3,340.7 1560.6,340.1 1564.9,340.1 1569.1,340.7 1573.4,341.3 1577.7,340.2 1581.9,340.4 1586.2,341.0 1590.5,341.5 1594.7,340.9 1599.0,340.6 1603.3,341.6 1607.5,340.1 1611.8,341.4 1616.1,340.5 1620.3,340.2 1624.6,340.2 1628.9,340.5 1633.1,341.3 1637.4,340.3 1641.7,340.9" fill="none" stroke="#c4c4c4" stroke-width="1.2" opacity="1"/><polyline points="1483.8,341.1 1484.8,328.0 1486.4,310.7 1489.4,306.2 1492.3,309.2 1495.3,300.9 1498.3,300.8 1501.2,303.3 1504.2,311.4 1507.1,307.1 1510.1,305.2 1513.0,309.8 1516.0,307.5 1518.9,304.9 1521.9,313.4 1524.8,311.7 1527.8,304.0 1530.7,309.6 1533.7,308.8 1536.7,314.7 1539.6,312.3 1542.6,304.7 1545.5,316.5 1548.5,301.8 1551.4,306.9 1554.4,312.7 1557.3,302.4 1560.3,308.1 1563.2,300.5 1566.2,311.2 1569.1,312.8 1572.1,309.6 1575.1,314.7 1578.0,305.2 1581.0,311.7 1583.9,309.9 1586.9,309.7 1589.8,307.6 1592.8,314.1 1595.7,315.9 1598.7,307.9 1601.6,311.1 1604.6,300.8 1607.5,311.8 1610.5,310.8 1613.5,316.7 1616.4,313.8 1619.4,304.7 1622.3,306.4 1625.3,311.2 1628.2,300.2 1631.2,307.7 1634.1,302.7 1637.1,301.8 1640.0,300.8 1642.3,308.3" fill="none" stroke="#c050c0" stroke-width="1.0" opacity="1"/><polyline points="1483.8,344.4 1484.8,331.3 1486.4,310.9 1489.4,300.9 1492.3,302.7 1495.3,305.0 1498.3,312.5 1501.2,300.1 1504.2,305.9 1507.1,307.5 1510.1,312.7 1513.0,311.7 1516.0,312.4 1518.9,303.2 1521.9,305.4 1524.8,304.5 1527.8,312.7 1530.7,313.9 1533.7,301.2 1536.7,301.6 1539.6,302.5 1542.6,302.5 1545.5,306.5 1548.5,308.1 1551.4,303.0 1554.4,298.9 1557.3,305.4 1560.3,304.6 1563.2,307.7 1566.2,313.8 1569.1,309.7 1572.1,306.9 1575.1,308.5 1578.0,309.5 1581.0,299.7 1583.9,313.0 1586.9,311.1 1589.8,312.6 1592.8,311.4 1595.7,305.0 1598.7,305.1 1601.6,300.5 1604.6,308.8 1607.5,299.8 1610.5,299.9 1613.5,302.1 1616.4,301.4 1619.4,304.2 1622.3,299.7 1625.3,298.8 1628.2,301.2 1631.2,300.4 1634.1,304.5 1637.1,299.2 1640.0,312.6 1642.3,306.7" fill="none" stroke="#c8c8c8" stroke-width="0.9" opacity="1"/><polyline points="1483.8,351.0 1484.8,337.9 1486.4,317.0 1489.4,308.4 1492.3,310.3 1495.3,312.1 1498.3,312.4 1501.2,308.0 1504.2,321.3 1507.1,324.0 1510.1,314.3 1513.0,314.6 1516.0,307.3 1518.9,307.6 1521.9,312.0 1524.8,310.6 1527.8,320.9 1530.7,308.7 1533.7,306.1 1536.7,323.2 1539.6,315.4 1542.6,308.4 1545.5,315.7 1548.5,306.2 1551.4,315.4 1554.4,323.7 1557.3,321.6 1560.3,318.5 1563.2,310.5 1566.2,312.4 1569.1,308.8 1572.1,319.9 1575.1,315.5 1578.0,320.0 1581.0,311.8 1583.9,309.8 1586.9,320.6 1589.8,323.8 1592.8,321.4 1595.7,320.5 1598.7,320.7 1601.6,319.3 1604.6,309.9 1607.5,315.2 1610.5,312.2 1613.5,306.2 1616.4,306.2 1619.4,310.8 1622.3,310.5 1625.3,318.4 1628.2,323.3 1631.2,313.9 1634.1,322.9 1637.1,323.9 1640.0,323.3 1642.3,314.9" fill="none" stroke="#38b8b8" stroke-width="1.0" opacity="1"/><polyline points="1483.8,354.3 1484.8,341.1 1486.4,317.2 1489.4,314.3 1492.3,314.4 1495.3,313.8 1498.3,314.0 1501.2,322.3 1504.2,327.7 1507.1,326.5 1510.1,319.4 1513.0,322.8 1516.0,325.7 1518.9,311.6 1521.9,323.0 1524.8,327.9 1527.8,325.4 1530.7,324.7 1533.7,319.4 1536.7,313.5 1539.6,325.5 1542.6,316.5 1545.5,325.7 1548.5,329.1 1551.4,317.8 1554.4,317.9 1557.3,328.6 1560.3,324.2 1563.2,313.3 1566.2,312.5 1569.1,313.0 1572.1,327.8 1575.1,325.9 1578.0,312.9 1581.0,326.2 1583.9,329.3 1586.9,322.9 1589.8,316.9 1592.8,320.8 1595.7,312.6 1598.7,310.3 1601.6,329.1 1604.6,322.8 1607.5,320.3 1610.5,328.4 1613.5,318.5 1616.4,327.1 1619.4,326.2 1622.3,314.1 1625.3,314.9 1628.2,315.7 1631.2,314.7 1634.1,321.5 1637.1,315.1 1640.0,318.2 1642.3,319.8" fill="none" stroke="#2cc058" stroke-width="1.2" opacity="1"/><polyline points="1483.8,354.3 1484.8,341.1 1486.4,317.8 1489.4,329.0 1492.3,321.0 1495.3,322.5 1498.3,324.3 1501.2,328.9 1504.2,322.0 1507.1,329.1 1510.1,323.1 1513.0,323.6 1516.0,323.4 1518.9,316.2 1521.9,322.2 1524.8,318.5 1527.8,315.9 1530.7,327.4 1533.7,318.4 1536.7,322.7 1539.6,326.3 1542.6,323.9 1545.5,320.6 1548.5,323.4 1551.4,323.9 1554.4,327.2 1557.3,317.4 1560.3,324.0 1563.2,319.5 1566.2,319.9 1569.1,327.0 1572.1,323.2 1575.1,324.0 1578.0,326.9 1581.0,329.1 1583.9,322.3 1586.9,324.7 1589.8,323.2 1592.8,323.3 1595.7,325.9 1598.7,322.4 1601.6,323.6 1604.6,322.8 1607.5,329.5 1610.5,326.0 1613.5,328.5 1616.4,329.5 1619.4,319.6 1622.3,324.0 1625.3,329.5 1628.2,328.0 1631.2,317.9 1634.1,317.6 1637.1,322.3 1640.0,316.9 1642.3,323.1" fill="none" stroke="#2cc058" stroke-width="1.0" opacity="1"/></svg>
<span class="g" style="left:1646.3px;top:295.1px;color:#e8e8e8">91</span>
<span class="g" style="left:1665.3px;top:302.6px;color:#e8e8e8">84</span>
<span class="g" style="left:1646.3px;top:314.1px;color:#3fd6d6">81</span>
<span class="g" style="left:1646.3px;top:334.1px;color:#e8e8e8">77</span>
<span class="g" style="left:1646.3px;top:509.9px;color:#e8e0b0">41</span>
<span class="g" style="left:1646.3px;top:557.5px;color:#d8d05a">31</span>
<span class="g" style="left:1213.7px;top:758.5px;"><span style="color:#d8d05a">CPU Usage</span> <span style="color:#ddd">|</span> <span style="color:#3fd05a">CPU Throttling</span></span>
<span class="g" style="right:1645.6px;top:774.0px;color:#e8e8e8">100%</span>
<span class="g" style="right:1645.6px;top:1259.4px;color:#e8e8e8">0%</span>
<span class="g" style="left:1647.6px;top:774.0px;color:#d8d05a">100%</span>
<span class="g" style="left:1647.6px;top:1259.4px;color:#3fd05a">0%</span>
<div style="left:919.0px;top:782.6px;width:724.3px;height:2.2px;background:#7d7a36"></div>
<div style="left:919.0px;top:1268.8px;width:724.3px;height:2.2px;background:#2f7a33"></div>
<span class="t" style="left:872.4px;top:1318.5px;color:#222">Remaining Battery:</span>
<div style="left:981.3px;top:1316.0px;width:81.4px;height:24.3px;background:#000"></div>
<span class="t" style="left:981.3px;top:1318.5px;color:#25c83a;width:81.4px;text-align:center">No battery</span>
<span class="t" style="left:1092.3px;top:1318.5px;color:#222">Test Started:</span>
<div style="left:1165.1px;top:1316.0px;width:145.4px;height:24.3px;background:#000"></div>
<span class="t" style="left:1165.1px;top:1318.5px;color:#25c83a;width:145.4px;text-align:center">2025/9/18 上午 01:18:24</span>
<span class="t" style="left:1340.4px;top:1318.5px;color:#222">Elapsed Time:</span>
<div style="left:1422.1px;top:1316.0px;width:83.4px;height:24.3px;background:#000"></div>
<span class="t" style="left:1422.1px;top:1318.5px;color:#25c83a;width:83.4px;text-align:center">00:10:06</span>
<div style="left:872.0px;top:1355.7px;width:73.8px;height:17.7px;background:#fdfdfd;border:1px solid #e2e2e2;border-radius:3px"></div>
<span class="t" style="left:872.0px;top:1354.6px;color:#b4b4b4;width:73.8px;text-align:center">Start</span>
<div style="left:957.0px;top:1355.7px;width:71.5px;height:17.7px;background:#fdfdfd;border:1px solid #e2e2e2;border-radius:3px"></div>
<span class="t" style="left:957.0px;top:1354.6px;color:#222;width:71.5px;text-align:center">Stop</span>
<div style="left:1061.1px;top:1355.7px;width:63.7px;height:17.7px;background:#fdfdfd;border:1px solid #e2e2e2;border-radius:3px"></div>
<span class="t" style="left:1061.1px;top:1354.6px;color:#222;width:63.7px;text-align:center">Clear</span>
<div style="left:1143.1px;top:1355.7px;width:68.9px;height:17.7px;background:#fdfdfd;border:1px solid #e2e2e2;border-radius:3px"></div>
<span class="t" style="left:1143.1px;top:1354.6px;color:#222;width:68.9px;text-align:center">Save</span>
<div style="left:1244.9px;top:1355.7px;width:65.6px;height:17.7px;background:#fdfdfd;border:1px solid #e2e2e2;border-radius:3px"></div>
<span class="t" style="left:1244.9px;top:1354.6px;color:#222;width:65.6px;text-align:center">CPUID</span>
<div style="left:1321.7px;top:1355.7px;width:76.5px;height:17.7px;background:#fdfdfd;border:1px solid #e2e2e2;border-radius:3px"></div>
<span class="t" style="left:1321.7px;top:1354.6px;color:#222;width:76.5px;text-align:center">Preferences</span>
<div style="left:1613.8px;top:1355.7px;width:70.9px;height:17.7px;background:#fdfdfd;border:1px solid #e2e2e2;border-radius:3px"></div>
<span class="t" style="left:1613.8px;top:1354.6px;color:#b4b4b4;width:70.9px;text-align:center">Close</span>
<div style="left:1704.4px;top:0.0px;width:6.3px;height:1391.1px;background:#8c8c8c"></div>
<div style="left:1709.6px;top:0.0px;width:850.4px;height:1391.1px;background:#fff;border-top:1px solid #777"></div>
<div style="left:1709.6px;top:1.0px;width:850.4px;height:30.2px;background:#f6f6f6"></div>
<div style="left:1715.5px;top:6.6px;width:15.4px;height:17.7px;background:#c8161d;border-radius:2px"></div>
<span class="t" style="left:1715.5px;top:5.4px;color:#fff;font-size:9px;font-weight:bold;width:15.4px;text-align:center">64</span>
<span class="t" style="left:1738.8px;top:5.5px;color:#9b9b9b;font-size:11.3px">AIDA64 Extreme v7.40.7100</span>
<span class="t" style="left:2435.8px;top:5.0px;color:#c4c4c4;font-size:13px;width:12px;text-align:center">&#8211;</span>
<span class="t" style="left:2482.5px;top:5.0px;color:#777;font-size:13px;width:12px;text-align:center">&#9633;</span>
<span class="t" style="left:2529.7px;top:5.0px;color:#777;font-size:13px;width:12px;text-align:center">&#10005;</span>
<div style="left:1709.6px;top:31.2px;width:850.4px;height:45.9px;background:#f1f1f1;border-bottom:1px solid #e2e2e2"></div>
<svg style="left:1722.9px;top:45.1px" width="18" height="18" viewBox="0 0 18 18"><path d="M14.8 5 A7.2 7.2 0 1 0 16.2 9.5" stroke="#1c1c1c" stroke-width="3" fill="none"/><path d="M10.5 1 L17.5 2.5 L15.5 9Z" fill="#1c1c1c"/></svg>
<div style="left:1758.7px;top:45.1px;width:14.0px;height:18.0px;background:#fdfdfd;border:1px solid #b9b9b9"></div>
<div style="left:1762.7px;top:52.1px;width:6.0px;height:1.0px;background:#ccc"></div>
<div style="left:1762.7px;top:56.1px;width:6.0px;height:1.0px;background:#ccc"></div>
<div style="left:1791.9px;top:54.1px;width:18.0px;height:4.0px;background:#777;border-radius:0 0 4px 4px"></div>
<div style="left:1795.9px;top:58.1px;width:10.0px;height:1.5px;background:#5a9a5a"></div>
<div style="left:1823.7px;top:50.1px;width:20.0px;height:9.0px;background:#3a4a3a;border:1px solid #2a2a2a"></div>
<div style="left:1825.7px;top:52.1px;width:16.0px;height:3.0px;background:#7a8a7a"></div>
<div style="left:1860.1px;top:46.1px;width:11.0px;height:9.0px;background:#3a9ad9;border:1px solid #1f6aa5"></div>
<div style="left:1867.1px;top:53.1px;width:11.0px;height:9.0px;background:#2aa198;border:1px solid #17655f"></div>
<svg style="left:1894.6px;top:44.1px" width="16" height="20" viewBox="0 0 13 16"><path d="M6 0 C7 4 12 6 12 11 C12 14 9.5 16 6.5 16 C3 16 1 14 1 11 C1 8 3 7 3.5 4 C5 5 5.5 6 5.5 8 C7 6 7 3 6 0Z" fill="#f08a1c"/><path d="M6.5 16 C4.5 16 3.5 14.5 3.5 13 C3.5 11 5.5 10 6 8 C8 10 9.5 11 9.5 13 C9.5 14.8 8.3 16 6.5 16Z" fill="#fbd34a"/></svg>
<div style="left:1930.4px;top:45.1px;width:13.0px;height:17.0px;background:#f7fbff;border:1px solid #b9c9dc"></div>
<div style="left:1928.4px;top:51.1px;width:9.0px;height:2.0px;background:#6fa8dc"></div>
<div style="left:1933.4px;top:56.1px;width:7.0px;height:1.0px;background:#b0bccc"></div>
<div style="left:1964.2px;top:45.1px;width:8.0px;height:8.0px;background:#1c7fc4;border-radius:50%"></div>
<div style="left:1960.2px;top:54.1px;width:16.0px;height:8.0px;background:#1c7fc4;border-radius:6px 6px 0 0"></div>
<div style="left:1969.2px;top:55.1px;width:8.0px;height:7.0px;background:#2aa198"></div>
<div style="left:1992.7px;top:44.1px;width:22.0px;height:20.0px;background:#15110c;border:1px solid #000"></div>
<div style="left:1995.7px;top:51.1px;width:16.0px;height:7.0px;background:#6b3a10"></div>
<div style="left:2027.5px;top:44.1px;width:20.0px;height:20.0px;border:3px solid #6ab42d;border-radius:50%;background:#fff8d8"></div>
<div style="left:2036.5px;top:48.1px;width:2.0px;height:7.0px;background:#d08a10"></div>
<div style="left:2361.4px;top:44.6px;width:151.6px;height:18.4px;background:#fff;border:1px solid #e6e6e6;border-bottom:1px solid #bdbdbd;border-radius:3px"></div>
<span class="t" style="left:2364.1px;top:43.8px;color:#8a8a8a;font-size:11.5px">搜尋</span>
<div style="left:2532.6px;top:46.6px;width:4.2px;height:4.2px;background:#222;border-radius:50%"></div>
<div style="left:2532.6px;top:53.0px;width:4.2px;height:4.2px;background:#222;border-radius:50%"></div>
<div style="left:2532.6px;top:59.4px;width:4.2px;height:4.2px;background:#222;border-radius:50%"></div>
<div style="left:1907.0px;top:77.1px;width:1.2px;height:1314.0px;background:#e4e4e4"></div>
<div style="left:2541.6px;top:77.1px;width:18.4px;height:1314.0px;background:#f4f4f4"></div>
<div style="left:2549.5px;top:155.8px;width:2.2px;height:1205.5px;background:#8b8b8b;border-radius:1px"></div>
<svg style="left:1717.2px;top:82.7px" width="10" height="10"><path d="M1 2.5 L5 6.5 L9 2.5" stroke="#555" stroke-width="1.3" fill="none"/></svg>
<div style="left:1732.6px;top:82.7px;width:11.0px;height:8.0px;background:#58aee4;border:1px solid #3b8cc8"></div>
<div style="left:1735.6px;top:90.7px;width:6.0px;height:2.0px;background:#3b8cc8"></div>
<span class="t" style="left:1749.0px;top:77.7px;color:#222">電腦</span>
<div style="left:1751.3px;top:101.4px;width:11.0px;height:8.0px;background:#58aee4;border:1px solid #3b8cc8"></div>
<div style="left:1754.3px;top:109.4px;width:6.0px;height:2.0px;background:#3b8cc8"></div>
<span class="t" style="left:1766.7px;top:96.4px;color:#222">摘要</span>
<div style="left:1751.3px;top:120.1px;width:11.0px;height:8.0px;background:#58aee4;border:1px solid #3b8cc8"></div>
<div style="left:1754.3px;top:128.1px;width:6.0px;height:2.0px;background:#3b8cc8"></div>
<span class="t" style="left:1766.7px;top:115.1px;color:#222">電腦名稱</span>
<div style="left:1751.3px;top:138.8px;width:11.0px;height:8.0px;background:#58aee4;border:1px solid #3b8cc8"></div>
<div style="left:1754.3px;top:146.8px;width:6.0px;height:2.0px;background:#3b8cc8"></div>
<span class="t" style="left:1766.7px;top:133.8px;color:#222">DMI</span>
<div style="left:1752.3px;top:155.5px;width:9.0px;height:14.0px;background:#2b2b2b"></div>
<span class="t" style="left:1766.7px;top:152.5px;color:#222">IPMI</span>
<div style="left:1752.3px;top:175.2px;width:9.0px;height:12.0px;background:#f08a1c;border-radius:5px 5px 4px 4px"></div>
<span class="t" style="left:1766.7px;top:171.2px;color:#222">超頻</span>
<div style="left:1752.3px;top:192.9px;width:9.0px;height:14.0px;background:#3d9a3d;border-radius:2px"></div>
<span class="t" style="left:1766.7px;top:189.9px;color:#222">電源管理</span>
<div style="left:1751.3px;top:213.6px;width:11.0px;height:8.0px;background:#58aee4;border:1px solid #3b8cc8"></div>
<div style="left:1754.3px;top:221.6px;width:6.0px;height:2.0px;background:#3b8cc8"></div>
<span class="t" style="left:1766.7px;top:208.6px;color:#222">手提電腦</span>
<div style="left:1744.7px;top:228.3px;width:63.0px;height:18.0px;background:#e6e6e6;border:1px solid #cfcfcf"></div>
<div style="left:1750.3px;top:230.3px;width:14.0px;height:14.0px;background:#fff;border:2px solid #e0a020;border-radius:50%"></div>
<span class="t" style="left:1766.7px;top:227.3px;color:#222">感應器</span>
<svg style="left:1717.2px;top:251.0px" width="10" height="10"><path d="M3 1 L7 5 L3 9" stroke="#a8a8a8" stroke-width="1.3" fill="none"/></svg>
<div style="left:1731.6px;top:250.0px;width:14.0px;height:12.0px;background:#4a9a5a;border:1px solid #2a6a3a"></div>
<div style="left:1734.6px;top:253.0px;width:5.0px;height:5.0px;background:#ddd"></div>
<span class="t" style="left:1749.0px;top:246.0px;color:#222">主機板</span>
<svg style="left:1717.2px;top:269.7px" width="10" height="10"><path d="M3 1 L7 5 L3 9" stroke="#a8a8a8" stroke-width="1.3" fill="none"/></svg>
<div style="left:1731.6px;top:267.7px;width:6.0px;height:6.0px;background:#1979d2"></div>
<div style="left:1738.6px;top:267.7px;width:6.0px;height:6.0px;background:#1979d2"></div>
<div style="left:1731.6px;top:274.7px;width:6.0px;height:6.0px;background:#1979d2"></div>
<div style="left:1738.6px;top:274.7px;width:6.0px;height:6.0px;background:#1979d2"></div>
<span class="t" style="left:1749.0px;top:264.7px;color:#222">作業系統</span>
<svg style="left:1717.2px;top:288.4px" width="10" height="10"><path d="M3 1 L7 5 L3 9" stroke="#a8a8a8" stroke-width="1.3" fill="none"/></svg>
<div style="left:1732.6px;top:286.4px;width:12.0px;height:14.0px;background:#2d3540;border:1px solid #111"></div>
<span class="t" style="left:1749.0px;top:283.4px;color:#222">伺服器</span>
<svg style="left:1717.2px;top:307.1px" width="10" height="10"><path d="M3 1 L7 5 L3 9" stroke="#a8a8a8" stroke-width="1.3" fill="none"/></svg>
<div style="left:1732.6px;top:307.1px;width:11.0px;height:8.0px;background:#58aee4;border:1px solid #3b8cc8"></div>
<div style="left:1735.6px;top:315.1px;width:6.0px;height:2.0px;background:#3b8cc8"></div>
<span class="t" style="left:1749.0px;top:302.1px;color:#222">顯示</span>
<svg style="left:1717.2px;top:325.8px" width="10" height="10"><path d="M3 1 L7 5 L3 9" stroke="#a8a8a8" stroke-width="1.3" fill="none"/></svg>
<div style="left:1731.6px;top:324.8px;width:13.0px;height:12.0px;background:#8a8f96;border-radius:50%"></div>
<span class="t" style="left:1749.0px;top:320.8px;color:#222">多媒體</span>
<svg style="left:1717.2px;top:344.5px" width="10" height="10"><path d="M3 1 L7 5 L3 9" stroke="#a8a8a8" stroke-width="1.3" fill="none"/></svg>
<div style="left:1731.6px;top:347.5px;width:14.0px;height:6.0px;background:#6b7077;border-radius:1px"></div>
<div style="left:1733.6px;top:351.5px;width:5.0px;height:1.5px;background:#3d9ad9"></div>
<span class="t" style="left:1749.0px;top:339.5px;color:#222">存放</span>
<svg style="left:1717.2px;top:363.2px" width="10" height="10"><path d="M3 1 L7 5 L3 9" stroke="#a8a8a8" stroke-width="1.3" fill="none"/></svg>
<div style="left:1731.6px;top:363.2px;width:14.0px;height:10.0px;background:#3a9ad9;border-radius:3px;border:1px solid #2aa198"></div>
<span class="t" style="left:1749.0px;top:358.2px;color:#222">網路</span>
<svg style="left:1717.2px;top:381.9px" width="10" height="10"><path d="M3 1 L7 5 L3 9" stroke="#a8a8a8" stroke-width="1.3" fill="none"/></svg>
<div style="left:1730.6px;top:379.9px;width:15.0px;height:15.0px;background:#4cae3c;border-radius:50%"></div>
<div style="left:1734.6px;top:383.9px;width:7.0px;height:7.0px;background:#eaf7e6;border-radius:50%"></div>
<span class="t" style="left:1749.0px;top:376.9px;color:#222">DirectX</span>
<svg style="left:1717.2px;top:400.6px" width="10" height="10"><path d="M3 1 L7 5 L3 9" stroke="#a8a8a8" stroke-width="1.3" fill="none"/></svg>
<div style="left:1731.6px;top:399.6px;width:10.0px;height:12.0px;background:#3c444d"></div>
<div style="left:1739.6px;top:404.6px;width:6.0px;height:7.0px;background:#9aa3ad"></div>
<span class="t" style="left:1749.0px;top:395.6px;color:#222">裝置</span>
<svg style="left:1717.2px;top:419.3px" width="10" height="10"><path d="M3 1 L7 5 L3 9" stroke="#a8a8a8" stroke-width="1.3" fill="none"/></svg>
<div style="left:1732.6px;top:418.3px;width:12.0px;height:12.0px;background:#e8eaee;border:1px solid #7a828c"></div>
<div style="left:1735.6px;top:421.3px;width:6.0px;height:6.0px;background:#59626e"></div>
<span class="t" style="left:1749.0px;top:414.3px;color:#222">軟體</span>
<svg style="left:1717.2px;top:438.0px" width="10" height="10"><path d="M3 1 L7 5 L3 9" stroke="#a8a8a8" stroke-width="1.3" fill="none"/></svg>
<div style="left:1731.6px;top:436.0px;width:14.0px;height:14.0px;background:#c8a21a;border-radius:3px 3px 7px 7px;border:2px solid #3a6a2a"></div>
<span class="t" style="left:1749.0px;top:433.0px;color:#222">安全性</span>
<svg style="left:1717.2px;top:456.7px" width="10" height="10"><path d="M3 1 L7 5 L3 9" stroke="#a8a8a8" stroke-width="1.3" fill="none"/></svg>
<div style="left:1732.6px;top:456.7px;width:12.0px;height:10.0px;background:#eef1f4;border:1px solid #9aa3ad"></div>
<span class="t" style="left:1749.0px;top:451.7px;color:#222">組態</span>
<svg style="left:1717.2px;top:475.4px" width="10" height="10"><path d="M3 1 L7 5 L3 9" stroke="#a8a8a8" stroke-width="1.3" fill="none"/></svg>
<div style="left:1731.6px;top:473.4px;width:14.0px;height:14.0px;background:#2f86d1;border-radius:3px"></div>
<div style="left:1733.6px;top:478.4px;width:10.0px;height:2.0px;background:#d6e9fa"></div>
<span class="t" style="left:1749.0px;top:470.4px;color:#222">資料庫</span>
<svg style="left:1717.2px;top:494.1px" width="10" height="10"><path d="M3 1 L7 5 L3 9" stroke="#a8a8a8" stroke-width="1.3" fill="none"/></svg>
<div style="left:1731.6px;top:492.1px;width:14.0px;height:14.0px;background:#f0a43a;border-radius:2px"></div>
<div style="left:1734.6px;top:496.1px;width:8.0px;height:6.0px;background:#fde2b5"></div>
<span class="t" style="left:1749.0px;top:489.1px;color:#222">效能測試</span>
<span class="t" style="left:1914.7px;top:79.5px;color:#444">欄位</span>
<span class="t" style="left:2115.0px;top:79.5px;color:#444">值</span>
<div style="left:2109.0px;top:79.7px;width:1.0px;height:19.7px;background:#e4e4e4"></div>
<div style="left:1928.5px;top:103.1px;width:14.0px;height:14.0px;background:#d7b21a;border-radius:3px 3px 7px 7px;border:2px solid #b5382a"></div>
<span class="t" style="left:1945.6px;top:100.1px;color:#222">偵測到機殼侵入</span>
<span class="t" style="left:2115.0px;top:100.1px;color:#222">否</span>
<div style="left:1917.8px;top:141.7px;width:3.0px;height:10.0px;background:#d9534f;border-radius:1px"></div>
<div style="left:1916.3px;top:149.7px;width:6.0px;height:6.0px;background:#d9534f;border-radius:50%"></div>
<span class="t" style="left:1930.8px;top:138.7px;color:#222">溫度</span>
<div style="left:1928.5px;top:162.1px;width:15.0px;height:12.0px;background:#4a9a5a;border:1px solid #2a6a3a"></div>
<div style="left:1931.5px;top:165.1px;width:5.0px;height:5.0px;background:#ddd"></div>
<span class="t" style="left:1945.6px;top:158.1px;color:#222">主機板</span>
<span class="t" style="left:2115.0px;top:158.1px;color:#222">31 °C</span>
<div style="left:1928.5px;top:184.9px;width:15.0px;height:5.0px;background:#6f6f6f;border-radius:1px"></div>
<div style="left:1933.5px;top:186.4px;width:8.0px;height:2.0px;background:#d8d8d8"></div>
<span class="t" style="left:1945.6px;top:177.4px;color:#222">CPU</span>
<span class="t" style="left:2115.0px;top:177.4px;color:#222">77 °C</span>
<div style="left:1928.5px;top:204.3px;width:15.0px;height:5.0px;background:#6f6f6f;border-radius:1px"></div>
<div style="left:1933.5px;top:205.8px;width:8.0px;height:2.0px;background:#d8d8d8"></div>
<span class="t" style="left:1945.6px;top:196.8px;color:#222">CPU Package</span>
<span class="t" style="left:2115.0px;top:196.8px;color:#222">88 °C</span>
<div style="left:1928.5px;top:223.6px;width:15.0px;height:5.0px;background:#6f6f6f;border-radius:1px"></div>
<div style="left:1933.5px;top:225.1px;width:8.0px;height:2.0px;background:#d8d8d8"></div>
<span class="t" style="left:1945.6px;top:216.1px;color:#222">CPU IA Cores</span>
<span class="t" style="left:2115.0px;top:216.1px;color:#222">87 °C</span>
<div style="left:1929.5px;top:238.5px;width:8.0px;height:8.0px;background:#2f8fd8;border:1px solid #1c5f99"></div>
<div style="left:1933.5px;top:243.5px;width:9.0px;height:8.0px;background:#1f7f78"></div>
<span class="t" style="left:1945.6px;top:235.5px;color:#222">CPU GT Cores</span>
<span class="t" style="left:2115.0px;top:235.5px;color:#222">49 °C</span>
<div style="left:1928.5px;top:262.3px;width:15.0px;height:5.0px;background:#6f6f6f;border-radius:1px"></div>
<div style="left:1933.5px;top:263.8px;width:8.0px;height:2.0px;background:#d8d8d8"></div>
<span class="t" style="left:1945.6px;top:254.8px;color:#222">CPU #1 / 核心 #1</span>
<span class="t" style="left:2115.0px;top:254.8px;color:#222">84 °C</span>
<div style="left:1928.5px;top:281.7px;width:15.0px;height:5.0px;background:#6f6f6f;border-radius:1px"></div>
<div style="left:1933.5px;top:283.2px;width:8.0px;height:2.0px;background:#d8d8d8"></div>
<span class="t" style="left:1945.6px;top:274.2px;color:#222">CPU #1 / 核心 #2</span>
<span class="t" style="left:2115.0px;top:274.2px;color:#222">81 °C</span>
<div style="left:1928.5px;top:301.0px;width:15.0px;height:5.0px;background:#6f6f6f;border-radius:1px"></div>
<div style="left:1933.5px;top:302.5px;width:8.0px;height:2.0px;background:#d8d8d8"></div>
<span class="t" style="left:1945.6px;top:293.5px;color:#222">CPU #1 / 核心 #3</span>
<span class="t" style="left:2115.0px;top:293.5px;color:#222">83 °C</span>
<div style="left:1928.5px;top:320.4px;width:15.0px;height:5.0px;background:#6f6f6f;border-radius:1px"></div>
<div style="left:1933.5px;top:321.9px;width:8.0px;height:2.0px;background:#d8d8d8"></div>
<span class="t" style="left:1945.6px;top:312.9px;color:#222">CPU #1 / 核心 #4</span>
<span class="t" style="left:2115.0px;top:312.9px;color:#222">85 °C</span>
<div style="left:1928.5px;top:339.7px;width:15.0px;height:5.0px;background:#6f6f6f;border-radius:1px"></div>
<div style="left:1933.5px;top:341.2px;width:8.0px;height:2.0px;background:#d8d8d8"></div>
<span class="t" style="left:1945.6px;top:332.2px;color:#222">CPU #1 / 核心 #5</span>
<span class="t" style="left:2115.0px;top:332.2px;color:#222">84 °C</span>
<div style="left:1928.5px;top:359.1px;width:15.0px;height:5.0px;background:#6f6f6f;border-radius:1px"></div>
<div style="left:1933.5px;top:360.6px;width:8.0px;height:2.0px;background:#d8d8d8"></div>
<span class="t" style="left:1945.6px;top:351.6px;color:#222">CPU #1 / 核心 #6</span>
<span class="t" style="left:2115.0px;top:351.6px;color:#222">89 °C</span>
<div style="left:1928.5px;top:378.4px;width:15.0px;height:5.0px;background:#6f6f6f;border-radius:1px"></div>
<div style="left:1933.5px;top:379.9px;width:8.0px;height:2.0px;background:#d8d8d8"></div>
<span class="t" style="left:1945.6px;top:370.9px;color:#222">CPU #1 / 核心 #7</span>
<span class="t" style="left:2115.0px;top:370.9px;color:#222">83 °C</span>
<div style="left:1928.5px;top:397.8px;width:15.0px;height:5.0px;background:#6f6f6f;border-radius:1px"></div>
<div style="left:1933.5px;top:399.3px;width:8.0px;height:2.0px;background:#d8d8d8"></div>
<span class="t" style="left:1945.6px;top:390.3px;color:#222">CPU #1 / 核心 #8</span>
<span class="t" style="left:2115.0px;top:390.3px;color:#222">87 °C</span>
<div style="left:1928.5px;top:417.1px;width:15.0px;height:5.0px;background:#6f6f6f;border-radius:1px"></div>
<div style="left:1933.5px;top:418.6px;width:8.0px;height:2.0px;background:#d8d8d8"></div>
<span class="t" style="left:1945.6px;top:409.6px;color:#222">CPU #1 / 核心 #9</span>
<span class="t" style="left:2115.0px;top:409.6px;color:#222">77 °C</span>
<div style="left:1928.5px;top:436.5px;width:15.0px;height:5.0px;background:#6f6f6f;border-radius:1px"></div>
<div style="left:1933.5px;top:438.0px;width:8.0px;height:2.0px;background:#d8d8d8"></div>
<span class="t" style="left:1945.6px;top:429.0px;color:#222">CPU #1 / 核心 #10</span>
<span class="t" style="left:2115.0px;top:429.0px;color:#222">77 °C</span>
<div style="left:1928.5px;top:455.8px;width:15.0px;height:5.0px;background:#6f6f6f;border-radius:1px"></div>
<div style="left:1933.5px;top:457.3px;width:8.0px;height:2.0px;background:#d8d8d8"></div>
<span class="t" style="left:1945.6px;top:448.3px;color:#222">CPU #1 / 核心 #11</span>
<span class="t" style="left:2115.0px;top:448.3px;color:#222">76 °C</span>
<div style="left:1928.5px;top:475.2px;width:15.0px;height:5.0px;background:#6f6f6f;border-radius:1px"></div>
<div style="left:1933.5px;top:476.7px;width:8.0px;height:2.0px;background:#d8d8d8"></div>
<span class="t" style="left:1945.6px;top:467.7px;color:#222">CPU #1 / 核心 #12</span>
<span class="t" style="left:2115.0px;top:467.7px;color:#222">77 °C</span>
<div style="left:1928.5px;top:494.5px;width:15.0px;height:5.0px;background:#6f6f6f;border-radius:1px"></div>
<div style="left:1933.5px;top:496.0px;width:8.0px;height:2.0px;background:#d8d8d8"></div>
<span class="t" style="left:1945.6px;top:487.0px;color:#222">CPU #1 / 核心 #13</span>
<span class="t" style="left:2115.0px;top:487.0px;color:#222">80 °C</span>
<div style="left:1928.5px;top:513.9px;width:15.0px;height:5.0px;background:#6f6f6f;border-radius:1px"></div>
<div style="left:1933.5px;top:515.4px;width:8.0px;height:2.0px;background:#d8d8d8"></div>
<span class="t" style="left:1945.6px;top:506.4px;color:#222">CPU #1 / 核心 #14</span>
<span class="t" style="left:2115.0px;top:506.4px;color:#222">79 °C</span>
<div style="left:1928.5px;top:533.2px;width:15.0px;height:5.0px;background:#6f6f6f;border-radius:1px"></div>
<div style="left:1933.5px;top:534.7px;width:8.0px;height:2.0px;background:#d8d8d8"></div>
<span class="t" style="left:1945.6px;top:525.7px;color:#222">CPU #1 / 核心 #15</span>
<span class="t" style="left:2115.0px;top:525.7px;color:#222">79 °C</span>
<div style="left:1928.5px;top:552.6px;width:15.0px;height:5.0px;background:#6f6f6f;border-radius:1px"></div>
<div style="left:1933.5px;top:554.1px;width:8.0px;height:2.0px;background:#d8d8d8"></div>
<span class="t" style="left:1945.6px;top:545.1px;color:#222">CPU #1 / 核心 #16</span>
<span class="t" style="left:2115.0px;top:545.1px;color:#222">79 °C</span>
<div style="left:1928.5px;top:571.9px;width:15.0px;height:5.0px;background:#6f6f6f;border-radius:1px"></div>
<div style="left:1933.5px;top:573.4px;width:8.0px;height:2.0px;background:#d8d8d8"></div>
<span class="t" style="left:1945.6px;top:564.4px;color:#222">CPU #1 / 核心 #17</span>
<span class="t" style="left:2115.0px;top:564.4px;color:#222">76 °C</span>
<div style="left:1928.5px;top:591.3px;width:15.0px;height:5.0px;background:#6f6f6f;border-radius:1px"></div>
<div style="left:1933.5px;top:592.8px;width:8.0px;height:2.0px;background:#d8d8d8"></div>
<span class="t" style="left:1945.6px;top:583.8px;color:#222">CPU #1 / 核心 #18</span>
<span class="t" style="left:2115.0px;top:583.8px;color:#222">76 °C</span>
<div style="left:1928.5px;top:610.6px;width:15.0px;height:5.0px;background:#6f6f6f;border-radius:1px"></div>
<div style="left:1933.5px;top:612.1px;width:8.0px;height:2.0px;background:#d8d8d8"></div>
<span class="t" style="left:1945.6px;top:603.1px;color:#222">CPU #1 / 核心 #19</span>
<span class="t" style="left:2115.0px;top:603.1px;color:#222">76 °C</span>
<div style="left:1928.5px;top:629.9px;width:15.0px;height:5.0px;background:#6f6f6f;border-radius:1px"></div>
<div style="left:1933.5px;top:631.4px;width:8.0px;height:2.0px;background:#d8d8d8"></div>
<span class="t" style="left:1945.6px;top:622.4px;color:#222">CPU #1 / 核心 #20</span>
<span class="t" style="left:2115.0px;top:622.4px;color:#222">76 °C</span>
<div style="left:1928.5px;top:649.3px;width:15.0px;height:5.0px;background:#6f6f6f;border-radius:1px"></div>
<div style="left:1933.5px;top:650.8px;width:8.0px;height:2.0px;background:#d8d8d8"></div>
<span class="t" style="left:1945.6px;top:641.8px;color:#222">CPU #1 / 核心 #21</span>
<span class="t" style="left:2115.0px;top:641.8px;color:#222">77 °C</span>
<div style="left:1928.5px;top:668.6px;width:15.0px;height:5.0px;background:#6f6f6f;border-radius:1px"></div>
<div style="left:1933.5px;top:670.1px;width:8.0px;height:2.0px;background:#d8d8d8"></div>
<span class="t" style="left:1945.6px;top:661.1px;color:#222">CPU #1 / 核心 #22</span>
<span class="t" style="left:2115.0px;top:661.1px;color:#222">77 °C</span>
<div style="left:1928.5px;top:688.0px;width:15.0px;height:5.0px;background:#6f6f6f;border-radius:1px"></div>
<div style="left:1933.5px;top:689.5px;width:8.0px;height:2.0px;background:#d8d8d8"></div>
<span class="t" style="left:1945.6px;top:680.5px;color:#222">CPU #1 / 核心 #23</span>
<span class="t" style="left:2115.0px;top:680.5px;color:#222">77 °C</span>
<div style="left:1928.5px;top:707.3px;width:15.0px;height:5.0px;background:#6f6f6f;border-radius:1px"></div>
<div style="left:1933.5px;top:708.8px;width:8.0px;height:2.0px;background:#d8d8d8"></div>
<span class="t" style="left:1945.6px;top:699.8px;color:#222">CPU #1 / 核心 #24</span>
<span class="t" style="left:2115.0px;top:699.8px;color:#222">77 °C</span>
<div style="left:1928.5px;top:727.2px;width:15.0px;height:5.0px;background:#3d3d3d;transform:skewX(-25deg)"></div>
<span class="t" style="left:1945.6px;top:719.2px;color:#222">PCH</span>
<span class="t" style="left:2115.0px;top:719.2px;color:#222">41 °C</span>
<div style="left:1932.5px;top:742.5px;width:8.0px;height:12.0px;background:#3f9a3f;border-radius:1px"></div>
<span class="t" style="left:1945.6px;top:738.5px;color:#222">VRM</span>
<span class="t" style="left:2115.0px;top:738.5px;color:#222">58 °C</span>
<div style="left:1928.5px;top:764.9px;width:16.0px;height:7.0px;background:#245a2a;border:1px solid #12301a"></div>
<div style="left:1930.5px;top:766.9px;width:11.0px;height:2.0px;background:#0c0c0c"></div>
<span class="t" style="left:1945.6px;top:757.9px;color:#222">DIMM2</span>
<span class="t" style="left:2115.0px;top:757.9px;color:#222">41 °C</span>
<div style="left:1928.5px;top:784.2px;width:16.0px;height:7.0px;background:#245a2a;border:1px solid #12301a"></div>
<div style="left:1930.5px;top:786.2px;width:11.0px;height:2.0px;background:#0c0c0c"></div>
<span class="t" style="left:1945.6px;top:777.2px;color:#222">DIMM4</span>
<span class="t" style="left:2115.0px;top:777.2px;color:#222">39 °C</span>
<div style="left:1928.5px;top:807.6px;width:14.0px;height:4.0px;background:#6b6b6b;border-radius:2px"></div>
<span class="t" style="left:1945.6px;top:796.6px;color:#222">Samsung SSD 960 PRO 1TB</span>
<span class="t" style="left:2115.0px;top:796.6px;color:#222">41 °C / 53 °C</span>
<svg style="left:1912.779487179487px;top:837.2752058875063px" width="16" height="16"><path d="M2 2 L14 14 M14 2 L2 14" stroke="#1f8fd0" stroke-width="4"/><circle cx="8" cy="8" r="2" fill="#fff"/></svg>
<span class="t" style="left:1930.8px;top:835.3px;color:#222">冷卻風扇</span>
<div style="left:1928.5px;top:862.1px;width:15.0px;height:5.0px;background:#6f6f6f;border-radius:1px"></div>
<div style="left:1933.5px;top:863.6px;width:8.0px;height:2.0px;background:#d8d8d8"></div>
<span class="t" style="left:1945.6px;top:854.6px;color:#222">CPU</span>
<span class="t" style="left:2115.0px;top:854.6px;color:#222">3221 RPM</span>
<div style="left:1930.5px;top:877.0px;width:11.0px;height:14.0px;background:#26303c;border:1px solid #111"></div>
<div style="left:1936.5px;top:879.0px;width:3.0px;height:10.0px;background:#5a6b7f"></div>
<span class="t" style="left:1945.6px;top:874.0px;color:#222">機殼 #1</span>
<span class="t" style="left:2115.0px;top:874.0px;color:#222">1901 RPM</span>
<div style="left:1930.5px;top:896.3px;width:11.0px;height:14.0px;background:#26303c;border:1px solid #111"></div>
<div style="left:1936.5px;top:898.3px;width:3.0px;height:10.0px;background:#5a6b7f"></div>
<span class="t" style="left:1945.6px;top:893.3px;color:#222">機殼 #2</span>
<span class="t" style="left:2115.0px;top:893.3px;color:#222">1603 RPM</span>
<div style="left:1930.5px;top:915.7px;width:11.0px;height:14.0px;background:#26303c;border:1px solid #111"></div>
<div style="left:1936.5px;top:917.7px;width:3.0px;height:10.0px;background:#5a6b7f"></div>
<span class="t" style="left:1945.6px;top:912.7px;color:#222">機殼 #3</span>
<span class="t" style="left:2115.0px;top:912.7px;color:#222">1472 RPM</span>
<div style="left:1912.8px;top:954.4px;width:14.0px;height:14.0px;background:#fbe8d0;border:2px solid #d49a5a;border-radius:50%"></div>
<span class="t" style="left:1930.8px;top:951.4px;color:#222">電壓值</span>
<div style="left:1928.5px;top:978.2px;width:15.0px;height:5.0px;background:#6f6f6f;border-radius:1px"></div>
<div style="left:1933.5px;top:979.7px;width:8.0px;height:2.0px;background:#d8d8d8"></div>
<span class="t" style="left:1945.6px;top:970.7px;color:#222">CPU 核心</span>
<span class="t" style="left:2115.0px;top:970.7px;color:#222">1.163 V</span>
<div style="left:1928.5px;top:997.6px;width:15.0px;height:5.0px;background:#6f6f6f;border-radius:1px"></div>
<div style="left:1933.5px;top:999.1px;width:8.0px;height:2.0px;background:#d8d8d8"></div>
<span class="t" style="left:1945.6px;top:990.1px;color:#222">CPU VID</span>
<span class="t" style="left:2115.0px;top:990.1px;color:#222">1.187 V</span>
<div style="left:1928.5px;top:1012.4px;width:14.0px;height:14.0px;background:#fbe8d0;border:2px solid #d49a5a;border-radius:50%"></div>
<span class="t" style="left:1945.6px;top:1009.4px;color:#222">+3.3 V</span>
<span class="t" style="left:2115.0px;top:1009.4px;color:#222">3.312 V</span>
<div style="left:1928.5px;top:1031.8px;width:14.0px;height:14.0px;background:#fbe8d0;border:2px solid #d49a5a;border-radius:50%"></div>
<span class="t" style="left:1945.6px;top:1028.8px;color:#222">+5 V</span>
<span class="t" style="left:2115.0px;top:1028.8px;color:#222">5.000 V</span>
<div style="left:1928.5px;top:1051.1px;width:14.0px;height:14.0px;background:#fbe8d0;border:2px solid #d49a5a;border-radius:50%"></div>
<span class="t" style="left:1945.6px;top:1048.1px;color:#222">+12 V</span>
<span class="t" style="left:2115.0px;top:1048.1px;color:#222">11.904 V</span>
<div style="left:1928.5px;top:1070.5px;width:14.0px;height:14.0px;background:#fbe8d0;border:2px solid #d49a5a;border-radius:50%"></div>
<span class="t" style="left:1945.6px;top:1067.5px;color:#222">+3.3 V 待命</span>
<span class="t" style="left:2115.0px;top:1067.5px;color:#222">3.360 V</span>
<div style="left:1928.5px;top:1094.8px;width:15.0px;height:5.0px;background:#3d3d3d;transform:skewX(-25deg)"></div>
<span class="t" style="left:1945.6px;top:1086.8px;color:#222">PCH 核心</span>
<span class="t" style="left:2115.0px;top:1086.8px;color:#222">1.048 V</span>
<div style="left:1928.5px;top:1109.1px;width:14.0px;height:14.0px;background:#fbe8d0;border:2px solid #d49a5a;border-radius:50%"></div>
<span class="t" style="left:1945.6px;top:1106.1px;color:#222">VDD</span>
<span class="t" style="left:2115.0px;top:1106.1px;color:#222">1.314 V</span>
<div style="left:1928.5px;top:1133.0px;width:15.0px;height:5.0px;background:#6f6f6f;border-radius:1px"></div>
<div style="left:1933.5px;top:1134.5px;width:8.0px;height:2.0px;background:#d8d8d8"></div>
<span class="t" style="left:1945.6px;top:1125.5px;color:#222">CPU L2</span>
<span class="t" style="left:2115.0px;top:1125.5px;color:#222">0.528 V</span>
<div style="left:1928.5px;top:1152.3px;width:15.0px;height:5.0px;background:#6f6f6f;border-radius:1px"></div>
<div style="left:1933.5px;top:1153.8px;width:8.0px;height:2.0px;background:#d8d8d8"></div>
<span class="t" style="left:1945.6px;top:1144.8px;color:#222">VCCIN Aux</span>
<span class="t" style="left:2115.0px;top:1144.8px;color:#222">1.760 V</span>
<div style="left:1928.5px;top:1171.7px;width:15.0px;height:5.0px;background:#6f6f6f;border-radius:1px"></div>
<div style="left:1933.5px;top:1173.2px;width:8.0px;height:2.0px;background:#d8d8d8"></div>
<span class="t" style="left:1945.6px;top:1164.2px;color:#222">VCCSA</span>
<span class="t" style="left:2115.0px;top:1164.2px;color:#222">1.312 V</span>
<div style="left:1929.5px;top:1186.5px;width:8.0px;height:8.0px;background:#2f8fd8;border:1px solid #1c5f99"></div>
<div style="left:1933.5px;top:1191.5px;width:9.0px;height:8.0px;background:#1f7f78"></div>
<span class="t" style="left:1945.6px;top:1183.5px;color:#222">iGPU</span>
<span class="t" style="left:2115.0px;top:1183.5px;color:#222">1.128 V</span>
<div style="left:1912.8px;top:1225.2px;width:14.0px;height:14.0px;background:#fbe8d0;border:2px solid #d49a5a;border-radius:50%"></div>
<span class="t" style="left:1930.8px;top:1222.2px;color:#222">電流值</span>
<div style="left:1928.5px;top:1249.1px;width:15.0px;height:5.0px;background:#6f6f6f;border-radius:1px"></div>
<div style="left:1933.5px;top:1250.6px;width:8.0px;height:2.0px;background:#d8d8d8"></div>
<span class="t" style="left:1945.6px;top:1241.6px;color:#222">CPU</span>
<span class="t" style="left:2115.0px;top:1241.6px;color:#222">4.00 A</span>
<div style="left:1912.8px;top:1283.3px;width:14.0px;height:14.0px;background:#fbe8d0;border:2px solid #d49a5a;border-radius:50%"></div>
<span class="t" style="left:1930.8px;top:1280.3px;color:#222">功耗值</span>
<div style="left:1928.5px;top:1307.1px;width:15.0px;height:5.0px;background:#6f6f6f;border-radius:1px"></div>
<div style="left:1933.5px;top:1308.6px;width:8.0px;height:2.0px;background:#d8d8d8"></div>
<span class="t" style="left:1945.6px;top:1299.6px;color:#222">CPU</span>
<span class="t" style="left:2115.0px;top:1299.6px;color:#222">4.65 W</span>
<div style="left:1928.5px;top:1326.5px;width:15.0px;height:5.0px;background:#6f6f6f;border-radius:1px"></div>
<div style="left:1933.5px;top:1328.0px;width:8.0px;height:2.0px;background:#d8d8d8"></div>
<span class="t" style="left:1945.6px;top:1319.0px;color:#222">CPU Package</span>
<span class="t" style="left:2115.0px;top:1319.0px;color:#222">249.88 W</span>
<div style="left:1928.5px;top:1345.8px;width:15.0px;height:5.0px;background:#6f6f6f;border-radius:1px"></div>
<div style="left:1933.5px;top:1347.3px;width:8.0px;height:2.0px;background:#d8d8d8"></div>
<span class="t" style="left:1945.6px;top:1338.3px;color:#222">CPU IA Cores</span>
<span class="t" style="left:2115.0px;top:1338.3px;color:#222">238.86 W</span>
<div style="left:1929.5px;top:1360.7px;width:8.0px;height:8.0px;background:#2f8fd8;border:1px solid #1c5f99"></div>
<div style="left:1933.5px;top:1365.7px;width:9.0px;height:8.0px;background:#1f7f78"></div>
<span class="t" style="left:1945.6px;top:1357.7px;color:#222">CPU GT Cores</span>
<span class="t" style="left:2115.0px;top:1357.7px;color:#222">0.01 W</span>
<div style="left:0.0px;top:1391.1px;width:2560.0px;height:50.9px;background:linear-gradient(90deg,#dcead0 0%,#dbe9c8 10%,#d7e7b6 25%,#d8e8ac 33%,#e3e99a 40%,#ece88c 46.3%,#e2e99a 52%,#d9e8a6 60%,#d5e5b2 67%,#e4e79a 72%,#e1eba6 78%,#e3edae 100%);border-top:2px solid #a9ad9a"></div>
<div style="left:20.5px;top:1404.7px;width:10.2px;height:10.2px;background:#1a8fe0;border-radius:1px"></div>
<div style="left:32.3px;top:1404.7px;width:10.2px;height:10.2px;background:#1a8fe0;border-radius:1px"></div>
<div style="left:20.5px;top:1416.5px;width:10.2px;height:10.2px;background:#1a8fe0;border-radius:1px"></div>
<div style="left:32.3px;top:1416.5px;width:10.2px;height:10.2px;background:#1a8fe0;border-radius:1px"></div>
<div style="left:59.1px;top:1401.7px;width:217.3px;height:28.0px;background:#f4f8ee;border:1px solid #dfe6d3;border-radius:16px"></div>
<svg style="left:66.5px;top:1407.7px" width="16" height="16"><circle cx="6.5" cy="6.5" r="4.8" stroke="#333" stroke-width="1.6" fill="none"/><path d="M10 10 L14.5 14.5" stroke="#333" stroke-width="1.8"/></svg>
<span class="t" style="left:96.2px;top:1405.7px;color:#777;font-size:13px">搜尋</span>
<div style="left:225.8px;top:1409.7px;width:14.0px;height:14.0px;background:#e2542c;border-radius:50%"></div>
<div style="left:240.6px;top:1410.7px;width:13.0px;height:13.0px;background:#f0a12a;border-radius:50%"></div>
<div style="left:255.3px;top:1411.7px;width:12.0px;height:12.0px;background:#9bbf2f;border-radius:50%"></div>
<div style="left:290.7px;top:1407.7px;width:14.0px;height:14.0px;background:#2b2b2b;border-radius:2px"></div>
<div style="left:296.7px;top:1412.7px;width:12.0px;height:12.0px;background:#f2f2f2;border:1.5px solid #2b2b2b;border-radius:2px"></div>
<div style="left:334.3px;top:1410.7px;width:12.0px;height:12.0px;background:#1d1d1d;border-radius:2px"></div>
<div style="left:342.3px;top:1413.7px;width:10.0px;height:10.0px;background:#3a78c9;border-radius:2px"></div>
<div style="left:347.8px;top:1400.7px;width:13.0px;height:13.0px;background:#d6281f;border-radius:50%"></div>
<span class="t" style="left:347.8px;top:1397.2px;color:#fff;font-size:9px;width:13px;text-align:center">1</span>
<div style="left:378.6px;top:1404.7px;width:22.0px;height:22.0px;border-radius:7px;background:conic-gradient(#2f7be0,#8a4fe0,#e0508a,#f0a030,#48b860,#2f7be0)"></div>
<div style="left:385.1px;top:1411.2px;width:9.0px;height:9.0px;background:#f3f6ea;border-radius:50%"></div>
<div style="left:423.2px;top:1404.7px;width:22.0px;height:22.0px;border-radius:50%;background:conic-gradient(from 200deg,#1fa0d8,#35c1a0,#4bd06a,#1b74c9,#1fa0d8)"></div>
<div style="left:431.2px;top:1411.7px;width:9.0px;height:8.0px;background:#e8f4f0;border-radius:50%"></div>
<div style="left:466.2px;top:1407.7px;width:22.0px;height:17.0px;background:#f2b92c;border-radius:2px"></div>
<div style="left:466.2px;top:1405.7px;width:10.0px;height:5.0px;background:#e09a1a;border-radius:2px"></div>
<div style="left:466.2px;top:1417.7px;width:22.0px;height:7.0px;background:#3f8fe0;border-radius:0 0 2px 2px"></div>
<div style="left:510.2px;top:1407.7px;width:22.0px;height:18.0px;background:#1672c9;border-radius:3px"></div>
<div style="left:516.2px;top:1412.7px;width:10.0px;height:8.0px;background:#f5c04a"></div>
<div style="left:553.8px;top:1406.7px;width:22.0px;height:18.0px;background:#1d8fe1;border-radius:3px"></div>
<div style="left:553.8px;top:1411.7px;width:12.0px;height:12.0px;background:#0f5fb5;border-radius:2px"></div>
<div style="left:565.8px;top:1410.7px;width:8.0px;height:7.0px;background:#cfe8fb"></div>
<div style="left:597.8px;top:1404.7px;width:22.0px;height:22.0px;border-radius:50%;background:conic-gradient(from -30deg,#e33b2e 0 33%,#f7c52d 33% 66%,#2fa04f 66% 100%)"></div>
<div style="left:603.8px;top:1410.7px;width:10.0px;height:10.0px;background:#3f86f0;border-radius:50%;border:1.5px solid #fff"></div>
<div style="left:641.8px;top:1404.7px;width:22.0px;height:22.0px;background:#c8161d;border-radius:3px"></div>
<span class="t" style="left:641.8px;top:1405.7px;color:#fff;font-size:13px;font-weight:bold;width:22px;text-align:center">64</span>
<div style="left:681.8px;top:1400.7px;width:30.0px;height:31.0px;background:rgba(255,255,255,.55);border-radius:5px"></div>
<div style="left:685.8px;top:1404.7px;width:22.0px;height:22.0px;background:#a40f16;border-radius:3px"></div>
<svg style="left:688.8px;top:1406.7px" width="16" height="18"><path d="M9 1 L4 9 H8 L6.5 17 L12 7 H8 Z" fill="#fff"/></svg>
<div style="left:688.8px;top:1430.2px;width:16.0px;height:3.0px;background:#2f7fd0;border-radius:2px"></div>
<div style="left:649.8px;top:1430.5px;width:6.0px;height:2.5px;background:#9a9a9a;border-radius:2px"></div>
<div style="left:729.4px;top:1406.7px;width:18.0px;height:18.0px;background:#4b53bc;border-radius:3px"></div>
<div style="left:742.4px;top:1408.7px;width:9.0px;height:15.0px;background:#7b83eb;border-radius:3px"></div>
<span class="t" style="left:729.4px;top:1405.7px;color:#fff;font-size:12px;font-weight:bold;width:18px;text-align:center">T</span>
<div style="left:774.1px;top:1404.7px;width:22.0px;height:22.0px;border-radius:50%;background:radial-gradient(circle at 35% 35%,#9a9a9a,#3a3a3a 60%,#1c1c1c)"></div>
<svg style="left:2311.8px;top:1411.7px" width="12" height="8"><path d="M1 7 L6 2 L11 7" stroke="#222" stroke-width="1.6" fill="none"/></svg>
<div style="left:2341.0px;top:1408.7px;width:13.0px;height:13.0px;border:1.5px solid #333;border-radius:2px"></div>
<div style="left:2349.0px;top:1414.7px;width:8.0px;height:8.0px;background:#d92b20;border-radius:50%"></div>
<span class="t" style="left:2373.8px;top:1405.7px;color:#222;font-size:14px;width:16px;text-align:center">中</span>
<div style="left:2403.7px;top:1408.7px;width:14.0px;height:11.0px;border:1.5px solid #222;border-radius:1px"></div>
<div style="left:2414.7px;top:1413.7px;width:7.0px;height:9.0px;background:#e8eccb;border:1.5px solid #222"></div>
<svg style="left:2429.3px;top:1408.7px" width="16" height="14"><path d="M1 5 H4 L8 1 V13 L4 9 H1Z" fill="#222"/><path d="M10.5 4 Q13 7 10.5 10" stroke="#222" stroke-width="1.4" fill="none"/></svg>
<span class="t" style="right:43.3px;top:1397.9px;color:#333;font-size:11px">上午 01:28</span>
<span class="t" style="right:43.3px;top:1413.6px;color:#333;font-size:11px">2025/9/18</span>
<svg style="left:2525.8px;top:1407.7px" width="14" height="16"><path d="M7 1 C3.5 1 3 4 3 7 L1.5 11 H12.5 L11 7 C11 4 10.5 1 7 1Z" fill="#1769c4"/><circle cx="7" cy="13" r="1.8" fill="#1769c4"/></svg>
</div></div>
</body></html>
